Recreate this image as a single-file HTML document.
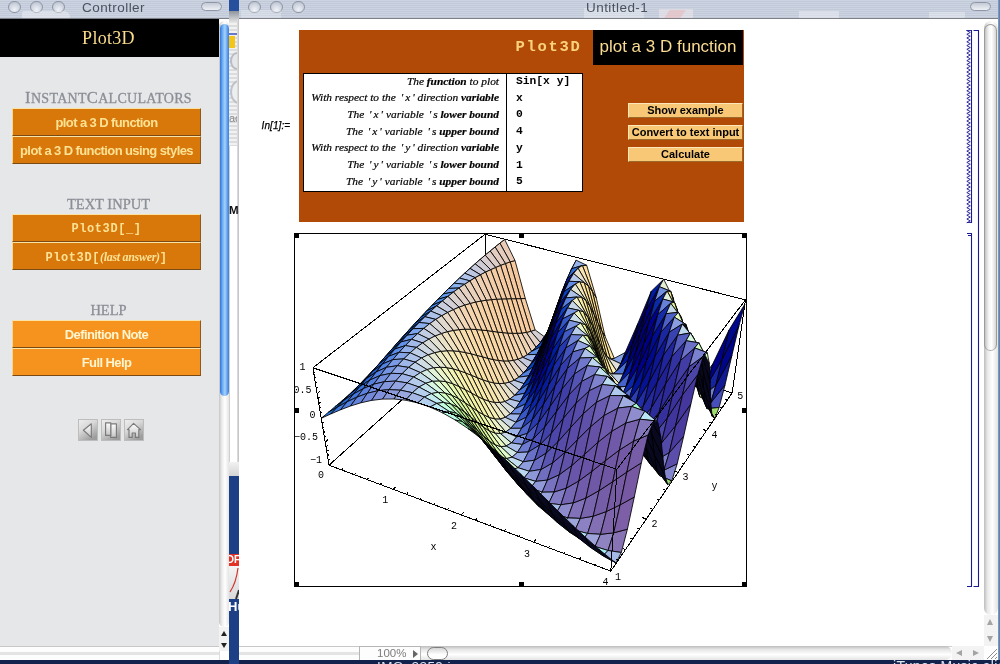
<!DOCTYPE html>
<html><head><meta charset="utf-8"><title>Plot3D</title>
<style>
html,body{margin:0;padding:0;}
body{width:1000px;height:664px;overflow:hidden;position:relative;will-change:transform;background:#1d3f86;font-family:"Liberation Sans",sans-serif;}
.abs{position:absolute;}
.tb{position:absolute;top:0;height:18px;background:repeating-linear-gradient(180deg,#cdd4e1 0,#cdd4e1 1px,#c2cad9 1px,#c2cad9 2px);border-bottom:1px solid #7d8187;}
.wb{position:absolute;top:0.5px;width:12.5px;height:12.5px;border-radius:50%;border:1px solid #8f97a6;background:radial-gradient(circle at 50% 75%,#eef1f6 0,#cfd5e0 55%,#aeb6c6 100%);box-sizing:border-box;}
.pill{position:absolute;height:9px;width:21px;border-radius:5px;border:1px solid #8f97a6;background:linear-gradient(180deg,#c4cad6,#eef0f5);box-sizing:border-box;}
.ttl{position:absolute;top:-0.5px;font-size:13.5px;letter-spacing:0.45px;color:#49515f;line-height:16px;white-space:nowrap;}
.obtn{position:absolute;left:12px;width:189px;height:28px;box-sizing:border-box;border-top:1px solid #fbe3a6;border-left:1px solid #f7d58c;border-bottom:1px solid #7a4a14;border-right:1px solid #8a5a20;color:#fde294;font-weight:bold;font-size:13px;text-align:center;line-height:27px;white-space:nowrap;letter-spacing:-0.6px;}
.o1{background:#d8770a;}
.o2{background:#f6921e;color:#fff6cf;}
.hd{position:absolute;left:0;width:217px;text-align:center;color:#8b8e96;-webkit-text-stroke:0.3px #8b8e96;font-family:"Liberation Serif",serif;white-space:nowrap;}
.row{position:absolute;right:0;white-space:nowrap;font-family:"Liberation Serif",serif;font-style:italic;font-size:11.4px;line-height:14px;color:#000;letter-spacing:0px;word-spacing:0px;-webkit-text-stroke:0.2px #000;}
.row u{display:inline-block;width:2px;text-decoration:none;}
.row i{display:inline-block;width:2px;}
.row b{font-weight:bold;}
.val{position:absolute;left:516px;font-family:"Liberation Mono",monospace;font-weight:bold;font-size:11.3px;line-height:14px;color:#000;white-space:nowrap;}
.cbtn{position:absolute;left:628px;width:115px;height:15px;box-sizing:border-box;background:#f9c877;border-top:1px solid #fde7b8;border-left:1px solid #fde7b8;border-bottom:1px solid #9a6a2a;border-right:1px solid #9a6a2a;font-size:11px;font-weight:bold;text-align:center;line-height:13px;color:#000;white-space:nowrap;}
.pl{font-family:"Liberation Mono",monospace;font-size:10px;fill:#000;}
</style></head><body>

<!-- gap strip between windows -->
<div class="abs" style="left:229px;top:0;width:10px;height:664px;background:#1d3f86;overflow:hidden;">
  <div class="abs" style="left:0;top:0;width:10px;height:11px;background:#27509c;"></div>
  <div class="abs" style="left:0;top:11px;width:10px;height:465px;background:#fff;"></div>
  <div class="abs" style="left:0;top:11px;width:10px;height:135px;background:repeating-linear-gradient(180deg,#f1f1f1 0,#f1f1f1 2px,#dcdcdc 2px,#dcdcdc 4px);"></div>
  <div class="abs" style="left:0;top:11px;width:10px;height:12px;background:linear-gradient(180deg,#8e949c,#e8e8e8);"></div>
  <div class="abs" style="left:0;top:33px;width:10px;height:2px;background:#6a78c8;"></div>
  <div class="abs" style="left:0;top:36px;width:6px;height:12px;background:#f2c518;"></div>
  <div class="abs" style="left:1px;top:52px;width:14px;height:18px;border-radius:50%;border:2px solid #b9bcc2;background:#e6e7ea;box-sizing:border-box;"></div>
  <div class="abs" style="left:1px;top:80px;width:18px;height:24px;border-radius:50%;border:2px solid #bfc2c8;background:#eceef0;box-sizing:border-box;"></div>
  <div class="abs" style="left:0px;top:112px;font-size:11px;line-height:12px;color:#8a8a8a;white-space:nowrap;">ac</div>
  <div class="abs" style="left:0;top:146px;width:1px;height:330px;background:#cfcfcf;"></div>
  <div class="abs" style="left:8px;top:19px;width:2px;height:457px;background:linear-gradient(90deg,#e3e3e3,#bdbdbd);"></div>
  <div class="abs" style="left:0px;top:203px;font-size:11.5px;font-weight:bold;line-height:14px;color:#111;white-space:nowrap;">Ma</div>
  <div class="abs" style="left:0;top:462px;width:10px;height:14px;background:linear-gradient(180deg,#f2f2f2,#d4d4d4);"></div>
  <div class="abs" style="left:0px;top:554px;width:10px;height:12px;background:#e23227;"></div>
  <div class="abs" style="left:-9px;top:554px;font-size:10px;font-weight:bold;line-height:12px;color:#fff;white-space:nowrap;">PDF</div>
  <div class="abs" style="left:0px;top:566px;width:10px;height:33px;background:linear-gradient(180deg,#f4f4f4,#d9d9dc);"></div>
  <svg class="abs" style="left:0;top:566px;" width="10" height="33" viewBox="0 0 10 33" fill="none" stroke="#d0352c" stroke-width="1.2"><path d="M1 26C5 20 8 10 9 2"/><path d="M7 33L10 24" stroke="#333" stroke-width="2"/></svg>
  <div class="abs" style="left:-1px;top:600px;font-size:13px;font-weight:bold;line-height:14px;color:#fff;white-space:nowrap;">Hu</div>
</div>

<!-- Controller window -->
<div class="abs" style="left:0;top:0;width:229px;height:660px;background:#e6e7e9;overflow:hidden;">
  <div class="tb" style="left:0;width:229px;"></div>
  <div class="wb" style="left:8px;"></div><div class="wb" style="left:30px;"></div><div class="wb" style="left:52px;"></div>
  <div class="abs" style="left:22px;top:11px;width:48px;height:7px;background:rgba(255,255,255,0.35);border-radius:2px 6px 0 0;"></div>
  <div class="ttl" style="left:82px;">Controller</div>
  <div class="pill" style="left:201px;top:2px;"></div>
  <div class="abs" style="left:0;top:19px;width:219px;height:38px;background:#000;"></div>
  <div class="abs" style="left:0;top:19px;width:217px;height:38px;text-align:center;font-family:'Liberation Serif',serif;font-size:18px;letter-spacing:0.3px;line-height:38px;color:#fbdc8c;">Plot3D</div>

  <div class="hd" style="top:89px;font-size:14px;line-height:18px;letter-spacing:0.3px;"><span style="font-size:16.5px;">I</span>NSTANT<span style="font-size:16.5px;">C</span>ALCULATORS</div>
  <div class="obtn o1" style="top:108px;">plot a 3 D function</div>
  <div class="obtn o1" style="top:136px;">plot a 3 D function using styles</div>

  <div class="hd" style="top:195px;font-size:14.5px;line-height:18px;">TEXT INPUT</div>
  <div class="obtn o1" style="top:214px;font-family:'Liberation Mono',monospace;font-size:12px;letter-spacing:0.6px;line-height:29px;">Plot3D[_]</div>
  <div class="obtn o1" style="top:242px;font-family:'Liberation Mono',monospace;font-size:12px;letter-spacing:0.6px;line-height:29px;">Plot3D[<span style="font-family:'Liberation Serif',serif;font-style:italic;font-weight:bold;font-size:12px;letter-spacing:-0.3px;">(last answer)</span>]</div>

  <div class="hd" style="top:301px;font-size:14.5px;line-height:18px;">HELP</div>
  <div class="obtn o2" style="top:320px;">Definition Note</div>
  <div class="obtn o2" style="top:348px;">Full Help</div>

  <!-- nav icons -->
  <svg class="abs" style="left:76px;top:417px;" width="70" height="26" viewBox="76 417 70 26">
    <defs><linearGradient id="ib" x1="0" y1="0" x2="0.6" y2="1"><stop offset="0" stop-color="#efefef"/><stop offset="0.45" stop-color="#d9d9d9"/><stop offset="1" stop-color="#9d9d9d"/></linearGradient>
    <linearGradient id="ig" x1="0" y1="0" x2="0" y2="1"><stop offset="0" stop-color="#ffffff"/><stop offset="1" stop-color="#c4c4c4"/></linearGradient></defs>
    <g stroke="#bdbdbd" stroke-width="1" fill="url(#ib)"><rect x="78.500" y="419.500" width="19" height="21"/><rect x="101.500" y="419.500" width="19" height="21"/><rect x="124.500" y="419.500" width="19" height="21"/></g>
    <g stroke="#7a7a7a" stroke-width="1.15" fill="url(#ig)" stroke-linejoin="round">
      <path d="M91.300 423.800L83.400 430.200L91.300 437.400Z"/>
      <rect x="110.600" y="423.800" width="5.800" height="13.600"/>
      <rect x="105.600" y="422.800" width="5.200" height="12.600"/>
      <path d="M133.600 423.400L127.500 429.600H129V437.400H132.200V433H135.400V437.400H138.800V429.600H140.500Z"/>
    </g>
  </svg>

  <!-- scrollbar -->
  <div class="abs" style="left:219px;top:19px;width:10px;height:641px;background:#fff;"></div>
  <div class="abs" style="left:219px;top:21px;width:10px;height:606px;border-radius:5px;background:linear-gradient(90deg,#c6c6c6 0,#ececec 30%,#ffffff 60%,#e4e4e4 100%);"></div>
  <div class="abs" style="left:220px;top:24px;width:9px;height:372px;border-radius:4.5px;background:linear-gradient(90deg,#3373d9 0,#6fb0f5 30%,#a6d2fb 55%,#5596ea 85%,#3f7fdc 100%);"></div>
  <div class="abs" style="left:219px;top:627px;width:10px;height:24px;background:#f3f3f3;"></div>
  <div class="abs" style="left:221px;top:631px;width:0;height:0;border-left:3px solid transparent;border-right:3px solid transparent;border-bottom:5px solid #222;"></div>
  <div class="abs" style="left:221px;top:643px;width:0;height:0;border-left:3px solid transparent;border-right:3px solid transparent;border-top:5px solid #222;"></div>
  <div class="abs" style="left:0;top:646px;width:219px;height:14px;background:linear-gradient(180deg,#c8c8c8 0,#c8c8c8 1px,#fdfdfd 1px,#fdfdfd 6px,#e4e4e4 6px,#e4e4e4 9px,#fdfdfd 9px,#fdfdfd 14px);"></div>
  <div class="abs" style="left:219px;top:651px;width:10px;height:9px;background:#fff;border-left:1px solid #ddd;box-sizing:border-box;"></div>
</div>

<!-- Main window -->
<div class="abs" style="left:239px;top:0;width:761px;height:660px;background:#fff;overflow:hidden;">
  <div class="tb" style="left:0;width:761px;"></div>
  <div class="wb" style="left:9px;"></div><div class="wb" style="left:31px;"></div><div class="wb" style="left:53px;"></div>
  <div class="abs" style="left:2px;top:10px;width:40px;height:8px;background:rgba(255,255,255,0.25);"></div>
  <div class="abs" style="left:345px;top:8px;width:60px;height:10px;background:rgba(255,255,255,0.3);"></div>
  <div class="abs" style="left:420px;top:9px;width:34px;height:9px;background:rgba(255,240,240,0.4);"></div>
  <div class="abs" style="left:428px;top:10px;width:16px;height:8px;background:rgba(235,160,160,0.35);transform:skewX(-35deg);"></div>
  <div class="abs" style="left:560px;top:11px;width:40px;height:7px;background:rgba(255,255,255,0.35);"></div>
  <div class="abs" style="left:690px;top:12px;width:36px;height:6px;background:rgba(255,255,255,0.3);"></div>
  <div class="ttl" style="left:347px;">Untitled-1</div>
  <div class="pill" style="left:731px;top:2px;width:21px;"></div>
</div>

<!-- notebook cell: brown panel -->
<div class="abs" style="left:261.500px;top:120px;font-family:'Liberation Sans',sans-serif;font-style:italic;font-size:10px;line-height:12px;color:#000;-webkit-text-stroke:0.25px #000;white-space:nowrap;letter-spacing:0.1px;">In[1]:=</div>
<div class="abs" style="left:299px;top:30px;width:445px;height:192px;background:#b04a06;"></div>
<div class="abs" style="left:593px;top:30px;width:150px;height:35px;background:#000;"></div>
<div class="abs" style="left:593px;top:30px;width:150px;height:35px;text-align:center;font-size:17px;line-height:34px;color:#fadb92;white-space:nowrap;">plot a 3 D function</div>
<div class="abs" style="left:515.5px;top:37px;font-family:'Liberation Mono',monospace;font-weight:bold;font-size:15.5px;letter-spacing:1.7px;line-height:20px;color:#fbd27c;white-space:nowrap;">Plot3D</div>
<div class="abs" style="left:303px;top:73px;width:280px;height:119px;background:#fff;border:1px solid #000;box-sizing:border-box;"></div>
<div class="abs" style="left:506px;top:73px;width:1px;height:119px;background:#000;"></div>
<div class="abs" style="left:303px;top:0;width:196px;height:200px;">
  <div class="row" style="top:73.7px;">The <b>function</b> to plot</div>
  <div class="row" style="top:90.3px;">With respect to the<u></u> '<i></i>x<i></i>' direction <b>variable</b></div>
  <div class="row" style="top:107.0px;">The<u></u> '<i></i>x<i></i>' variable<u></u> '<i></i>s <b>lower bound</b></div>
  <div class="row" style="top:123.6px;">The<u></u> '<i></i>x<i></i>' variable<u></u> '<i></i>s <b>upper bound</b></div>
  <div class="row" style="top:140.3px;">With respect to the<u></u> '<i></i>y<i></i>' direction <b>variable</b></div>
  <div class="row" style="top:157.1px;">The<u></u> '<i></i>y<i></i>' variable<u></u> '<i></i>s <b>lower bound</b></div>
  <div class="row" style="top:173.9px;">The<u></u> '<i></i>y<i></i>' variable<u></u> '<i></i>s <b>upper bound</b></div>
</div>
<div class="val" style="top:74.1px;">Sin[x y]</div>
<div class="val" style="top:90.7px;">x</div>
<div class="val" style="top:107.4px;">0</div>
<div class="val" style="top:124.0px;">4</div>
<div class="val" style="top:140.7px;">y</div>
<div class="val" style="top:157.5px;">1</div>
<div class="val" style="top:174.3px;">5</div>
<div class="cbtn" style="top:103px;">Show example</div>
<div class="cbtn" style="top:125px;">Convert to text input</div>
<div class="cbtn" style="top:147px;">Calculate</div>

<!-- plot -->
<svg class="abs" style="left:0;top:0;" width="1000" height="664" viewBox="0 0 1000 664">
<rect x="294.5" y="233.500" width="452" height="353" fill="none" stroke="#000" stroke-width="1"/>
<g fill="#000">
<rect x="294" y="233" width="5" height="5"/><rect x="519" y="233" width="5" height="5"/><rect x="742" y="233" width="5" height="5"/>
<rect x="294" y="408" width="5" height="5"/><rect x="742" y="408" width="5" height="5"/>
<rect x="294" y="582" width="5" height="5"/><rect x="519" y="582" width="5" height="5"/><rect x="742" y="582" width="5" height="5"/>
</g>
<g stroke="#000" stroke-width="1" fill="none" shape-rendering="crispEdges">
<path d="M329.0 465.2L312.9 367.8"/>
<path d="M329.0 465.2L488.2 322.4"/>
<path d="M312.9 367.8L485.0 234.3"/>
<path d="M488.2 322.4L485.0 234.3"/>
<path d="M488.2 322.4L732.2 392.9"/>
<path d="M485.0 234.3L745.5 299.8"/>
<path d="M732.2 392.9L745.5 299.8"/>
</g>
<g stroke="#000" stroke-width="0.85" stroke-linejoin="round">
<polygon points="530.7,331.3 540.4,342.6 544.8,337.0 535.1,329.9" fill="#d4cdd2"/>
<polygon points="526.3,332.4 536.1,347.4 540.4,342.6 530.7,331.3" fill="#e2d1c6"/>
<polygon points="520.7,298.6 530.7,331.3 535.1,329.9 525.3,298.5" fill="#f5cba1"/>
<polygon points="540.4,342.6 550.3,327.6 554.7,317.4 544.8,337.0" fill="#000067"/>
<polygon points="536.1,347.4 545.9,337.3 550.3,327.6 540.4,342.6" fill="#00099a"/>
<polygon points="521.7,333.0 531.6,351.4 536.1,347.4 526.3,332.4" fill="#ead2bc"/>
<polygon points="516.0,298.7 526.3,332.4 530.7,331.3 520.7,298.6" fill="#f6cca0"/>
<polygon points="531.6,351.4 541.5,346.3 545.9,337.3 536.1,347.4" fill="#054ecb"/>
<polygon points="481.9,283.6 490.4,253.4 495.2,248.9 486.6,279.7" fill="#08081e"/>
<polygon points="517.1,333.3 527.2,354.7 531.6,351.4 521.7,333.0" fill="#efd3b5"/>
<polygon points="527.2,354.7 537.0,354.4 541.5,346.3 531.6,351.4" fill="#5d8ee7"/>
<polygon points="477.2,287.6 485.6,258.1 490.4,253.4 481.9,283.6" fill="#08081e"/>
<polygon points="511.3,298.7 521.7,333.0 526.3,332.4 516.0,298.7" fill="#f7cc9f"/>
<polygon points="510.2,261.9 520.7,298.6 525.3,298.5 515.0,260.5" fill="#f5c89d"/>
<polygon points="522.6,357.3 532.5,361.6 537.0,354.4 527.2,354.7" fill="#9eb6e9"/>
<polygon points="472.4,291.7 480.7,262.8 485.6,258.1 477.2,287.6" fill="#08081e"/>
<polygon points="512.3,333.3 522.6,357.3 527.2,354.7 517.1,333.3" fill="#f2d3af"/>
<polygon points="550.3,327.6 560.8,296.1 565.3,283.9 554.7,317.4" fill="#08081e"/>
<polygon points="610.5,358.9 620.8,363.8 625.2,352.5 614.3,358.3" fill="#83a0e6"/>
<polygon points="545.9,337.3 556.2,308.7 560.8,296.1 550.3,327.6" fill="#08081e"/>
<polygon points="517.9,359.2 528.0,367.8 532.5,361.6 522.6,357.3" fill="#c5cade"/>
<polygon points="505.4,263.5 516.0,298.7 520.7,298.6 510.2,261.9" fill="#f5c99f"/>
<polygon points="506.5,298.8 517.1,333.3 521.7,333.0 511.3,298.7" fill="#f7cd9e"/>
<polygon points="601.4,329.7 610.5,358.9 614.3,358.3 605.0,336.2" fill="#fce3a1"/>
<polygon points="541.5,346.3 551.7,321.2 556.2,308.7 545.9,337.3" fill="#08081e"/>
<polygon points="467.5,295.8 475.8,267.6 480.7,262.8 472.4,291.7" fill="#08081e"/>
<polygon points="490.4,253.4 499.9,243.2 504.7,239.5 495.2,248.9" fill="#08081e"/>
<polygon points="537.0,354.4 547.1,333.6 551.7,321.2 541.5,346.3" fill="#00004f"/>
<polygon points="507.5,333.0 517.9,359.2 522.6,357.3 512.3,333.3" fill="#f5d3ab"/>
<polygon points="606.8,356.1 616.6,371.0 620.8,363.8 610.5,358.9" fill="#dcded7"/>
<polygon points="499.9,243.2 510.2,261.9 515.0,260.5 504.7,239.5" fill="#e9cbb7"/>
<polygon points="532.5,361.6 542.6,345.4 547.1,333.6 537.0,354.4" fill="#000070"/>
<polygon points="513.2,360.4 523.4,373.0 528.0,367.8 517.9,359.2" fill="#dbd3d1"/>
<polygon points="462.5,299.9 470.8,272.5 475.8,267.6 467.5,295.8" fill="#08081e"/>
<polygon points="485.6,258.1 495.1,247.0 499.9,243.2 490.4,253.4" fill="#08081e"/>
<polygon points="500.6,265.3 511.3,298.7 516.0,298.7 505.4,263.5" fill="#f5caa1"/>
<polygon points="528.0,367.8 538.0,356.6 542.6,345.4 532.5,361.6" fill="#000899"/>
<polygon points="501.6,298.9 512.3,333.3 517.1,333.3 506.5,298.8" fill="#f7cd9f"/>
<polygon points="495.1,247.0 505.4,263.5 510.2,261.9 499.9,243.2" fill="#e6ccbc"/>
<polygon points="523.4,373.0 533.4,366.8 538.0,356.6 528.0,367.8" fill="#0144c4"/>
<polygon points="616.6,371.0 628.0,360.4 632.8,343.2 620.8,363.8" fill="#0015a0"/>
<polygon points="597.7,321.9 606.8,356.1 610.5,358.9 601.4,329.7" fill="#fde192"/>
<polygon points="620.8,363.8 632.8,343.2 637.8,323.7 625.2,352.5" fill="#000077"/>
<polygon points="457.5,304.1 465.8,277.4 470.8,272.5 462.5,299.9" fill="#08081e"/>
<polygon points="502.5,332.6 513.2,360.4 517.9,359.2 507.5,333.0" fill="#f6d3a8"/>
<polygon points="603.2,350.3 612.7,373.9 616.6,371.0 606.8,356.1" fill="#f7eab3"/>
<polygon points="508.3,360.9 518.7,377.1 523.4,373.0 513.2,360.4" fill="#e7d8c5"/>
<polygon points="480.7,262.8 490.2,251.0 495.1,247.0 485.6,258.1" fill="#08081e"/>
<polygon points="612.7,373.9 623.4,374.1 628.0,360.4 616.6,371.0" fill="#4d70d4"/>
<polygon points="592.3,291.0 601.4,329.7 605.0,336.2 596.2,297.6" fill="#fedc8b"/>
<polygon points="495.6,267.4 506.5,298.8 511.3,298.7 500.6,265.3" fill="#f4cba3"/>
<polygon points="518.7,377.1 528.8,375.9 533.4,366.8 523.4,373.0" fill="#5181e1"/>
<polygon points="496.6,299.2 507.5,333.0 512.3,333.3 501.6,298.9" fill="#f7ce9f"/>
<polygon points="490.2,251.0 500.6,265.3 505.4,263.5 495.1,247.0" fill="#e3cdc1"/>
<polygon points="452.4,308.4 460.7,282.4 465.8,277.4 457.5,304.1" fill="#08081e"/>
<polygon points="475.8,267.6 485.2,255.1 490.2,251.0 480.7,262.8" fill="#08081e"/>
<polygon points="608.9,372.5 619.1,383.3 623.4,374.1 612.7,373.9" fill="#bfcde5"/>
<polygon points="513.9,380.2 524.1,383.7 528.8,375.9 518.7,377.1" fill="#93afe9"/>
<polygon points="503.4,360.9 513.9,380.2 518.7,377.1 508.3,360.9" fill="#efdabc"/>
<polygon points="560.8,296.1 571.7,268.7 576.2,260.2 565.3,283.9" fill="#08081e"/>
<polygon points="497.5,332.0 508.3,360.9 513.2,360.4 502.5,332.6" fill="#f7d4a5"/>
<polygon points="556.2,308.7 567.1,278.9 571.7,268.7 560.8,296.1" fill="#08081e"/>
<polygon points="490.6,269.6 501.6,298.9 506.5,298.8 495.6,267.4" fill="#f3cca6"/>
<polygon points="447.3,312.7 455.5,287.5 460.7,282.4 452.4,308.4" fill="#08081e"/>
<polygon points="599.5,342.5 608.9,372.5 612.7,373.9 603.2,350.3" fill="#fae798"/>
<polygon points="485.2,255.1 495.6,267.4 500.6,265.3 490.2,251.0" fill="#decdc7"/>
<polygon points="551.7,321.2 562.4,290.6 567.1,278.9 556.2,308.7" fill="#08081e"/>
<polygon points="593.9,313.8 603.2,350.3 606.8,356.1 597.7,321.9" fill="#fce089"/>
<polygon points="470.8,272.5 480.2,259.4 485.2,255.1 475.8,267.6" fill="#08081e"/>
<polygon points="547.1,333.6 557.8,303.5 562.4,290.6 551.7,321.2" fill="#08081e"/>
<polygon points="542.6,345.4 553.1,317.1 557.8,303.5 547.1,333.6" fill="#08081e"/>
<polygon points="491.5,299.6 502.5,332.6 507.5,333.0 496.6,299.2" fill="#f7cfa0"/>
<polygon points="538.0,356.6 548.4,331.1 553.1,317.1 542.6,345.4" fill="#00004e"/>
<polygon points="509.1,382.2 519.4,390.3 524.1,383.7 513.9,380.2" fill="#bfcae2"/>
<polygon points="605.2,367.3 615.0,387.4 619.1,383.3 608.9,372.5" fill="#f0eec2"/>
<polygon points="686.9,362.0 695.5,386.7 699.1,382.2 688.9,372.2" fill="#f0f6af"/>
<polygon points="533.4,366.8 543.7,345.1 548.4,331.1 538.0,356.6" fill="#000061"/>
<polygon points="588.3,285.8 597.7,321.9 601.4,329.7 592.3,291.0" fill="#fedd8c"/>
<polygon points="619.1,383.3 630.7,371.3 635.7,352.4 623.4,374.1" fill="#00169e"/>
<polygon points="528.8,375.9 539.0,358.6 543.7,345.1 533.4,366.8" fill="#00007b"/>
<polygon points="442.1,317.0 450.3,292.7 455.5,287.5 447.3,312.7" fill="#08081e"/>
<polygon points="498.3,360.4 509.1,382.2 513.9,380.2 503.4,360.9" fill="#f3dbb5"/>
<polygon points="623.4,374.1 635.7,352.4 640.9,331.2 628.0,360.4" fill="#00007e"/>
<polygon points="615.0,387.4 626.0,386.4 630.7,371.3 619.1,383.3" fill="#4463cc"/>
<polygon points="465.8,277.4 475.1,263.8 480.2,259.4 470.8,272.5" fill="#08081e"/>
<polygon points="492.4,331.3 503.4,360.9 508.3,360.9 497.5,332.0" fill="#f8d5a4"/>
<polygon points="480.2,259.4 490.6,269.6 495.6,267.4 485.2,255.1" fill="#d8cdce"/>
<polygon points="582.4,265.5 592.3,291.0 596.2,297.6 586.7,265.3" fill="#fcdfa1"/>
<polygon points="485.5,272.0 496.6,299.2 501.6,298.9 490.6,269.6" fill="#f2cda9"/>
<polygon points="695.5,386.7 707.2,384.9 712.7,364.1 699.1,382.2" fill="#374bba"/>
<polygon points="524.1,383.7 534.3,371.3 539.0,358.6 528.8,375.9" fill="#000a9b"/>
<polygon points="628.0,360.4 640.9,331.2 646.2,310.0 632.8,343.2" fill="#00006d"/>
<polygon points="504.1,383.3 514.6,395.4 519.4,390.3 509.1,382.2" fill="#d9d8d6"/>
<polygon points="519.4,390.3 529.6,382.9 534.3,371.3 524.1,383.7" fill="#033cbd"/>
<polygon points="571.7,268.7 582.4,265.5 586.7,265.3 576.2,260.2" fill="#97b5ec"/>
<polygon points="611.1,386.6 621.6,396.3 626.0,386.4 615.0,387.4" fill="#b3c5e7"/>
<polygon points="486.3,300.2 497.5,332.0 502.5,332.6 491.5,299.6" fill="#f7d0a2"/>
<polygon points="436.8,321.5 445.0,298.0 450.3,292.7 442.1,317.0" fill="#08081e"/>
<polygon points="693.1,381.4 702.9,396.3 707.2,384.9 695.5,386.7" fill="#c7dae7"/>
<polygon points="460.7,282.4 470.0,268.4 475.1,263.8 465.8,277.4" fill="#08081e"/>
<polygon points="632.8,343.2 646.2,310.0 651.3,291.2 637.8,323.7" fill="#000067"/>
<polygon points="595.7,333.5 605.2,367.3 608.9,372.5 599.5,342.5" fill="#f8e488"/>
<polygon points="475.1,263.8 485.5,272.0 490.6,269.6 480.2,259.4" fill="#d1ccd4"/>
<polygon points="514.6,395.4 524.9,393.2 529.6,382.9 519.4,390.3" fill="#4773da"/>
<polygon points="601.5,359.3 611.1,386.6 615.0,387.4 605.2,367.3" fill="#f7ed9b"/>
<polygon points="590.0,306.3 599.5,342.5 603.2,350.3 593.9,313.8" fill="#fbe086"/>
<polygon points="493.1,359.5 504.1,383.3 509.1,382.2 498.3,360.4" fill="#f6dcaf"/>
<polygon points="480.4,274.7 491.5,299.6 496.6,299.2 485.5,272.0" fill="#f1cead"/>
<polygon points="679.3,322.8 686.9,362.0 688.9,372.2 681.1,338.2" fill="#08081e"/>
<polygon points="567.1,278.9 578.0,268.2 582.4,265.5 571.7,268.7" fill="#2f6ad9"/>
<polygon points="487.1,330.6 498.3,360.4 503.4,360.9 492.4,331.3" fill="#f9d6a4"/>
<polygon points="584.1,282.5 593.9,313.8 597.7,321.9 588.3,285.8" fill="#fde093"/>
<polygon points="431.4,325.9 439.6,303.3 445.0,298.0 436.8,321.5" fill="#08081e"/>
<polygon points="578.0,268.2 588.3,285.8 592.3,291.0 582.4,265.5" fill="#f6e2b3"/>
<polygon points="685.2,346.7 693.1,381.4 695.5,386.7 686.9,362.0" fill="#08081e"/>
<polygon points="499.0,383.5 509.7,399.1 514.6,395.4 504.1,383.3" fill="#e8dfc9"/>
<polygon points="455.5,287.5 464.7,273.2 470.0,268.4 460.7,282.4" fill="#08081e"/>
<polygon points="509.7,399.1 520.1,401.8 524.9,393.2 514.6,395.4" fill="#87a5e7"/>
<polygon points="607.4,381.3 617.4,400.5 621.6,396.3 611.1,386.6" fill="#eef3c6"/>
<polygon points="470.0,268.4 480.4,274.7 485.5,272.0 475.1,263.8" fill="#c8cadb"/>
<polygon points="562.4,290.6 573.5,273.5 578.0,268.2 567.1,278.9" fill="#001ca9"/>
<polygon points="481.0,301.0 492.4,331.3 497.5,332.0 486.3,300.2" fill="#f7d1a4"/>
<polygon points="621.6,396.3 633.4,385.7 638.5,365.8 626.0,386.4" fill="#0b26a6"/>
<polygon points="702.9,396.3 715.9,385.2 722.2,359.2 707.2,384.9" fill="#16249f"/>
<polygon points="699.8,396.7 710.8,402.7 715.9,385.2 702.9,396.3" fill="#7283d5"/>
<polygon points="691.3,368.4 699.8,396.7 702.9,396.3 693.1,381.4" fill="#08081e"/>
<polygon points="617.4,400.5 628.5,400.9 633.4,385.7 621.6,396.3" fill="#576fcf"/>
<polygon points="626.0,386.4 638.5,365.8 643.9,343.4 630.7,371.3" fill="#00008a"/>
<polygon points="426.0,330.5 434.2,308.7 439.6,303.3 431.4,325.9" fill="#08081e"/>
<polygon points="557.8,303.5 568.9,281.3 573.5,273.5 562.4,290.6" fill="#000081"/>
<polygon points="475.1,277.6 486.3,300.2 491.5,299.6 480.4,274.7" fill="#efcfb1"/>
<polygon points="450.3,292.7 459.5,278.1 464.7,273.2 455.5,287.5" fill="#08081e"/>
<polygon points="487.8,358.3 499.0,383.5 504.1,383.3 493.1,359.5" fill="#f8ddab"/>
<polygon points="553.1,317.1 564.1,291.5 568.9,281.3 557.8,303.5" fill="#00006a"/>
<polygon points="504.7,401.5 515.2,408.8 520.1,401.8 509.7,399.1" fill="#b8c7e5"/>
<polygon points="481.7,330.0 493.1,359.5 498.3,360.4 487.1,330.6" fill="#f9d7a4"/>
<polygon points="548.4,331.1 559.4,303.8 564.1,291.5 553.1,317.1" fill="#000060"/>
<polygon points="573.5,273.5 584.1,282.5 588.3,285.8 578.0,268.2" fill="#e6e0cd"/>
<polygon points="493.7,382.9 504.7,401.5 509.7,399.1 499.0,383.5" fill="#f0e2bf"/>
<polygon points="630.7,371.3 643.9,343.4 649.3,320.9 635.7,352.4" fill="#00007b"/>
<polygon points="543.7,345.1 554.6,317.6 559.4,303.8 548.4,331.1" fill="#00005e"/>
<polygon points="464.7,273.2 475.1,277.6 480.4,274.7 470.0,268.4" fill="#bdc7e2"/>
<polygon points="539.0,358.6 549.7,332.6 554.6,317.6 543.7,345.1" fill="#000063"/>
<polygon points="534.3,371.3 544.9,348.0 549.7,332.6 539.0,358.6" fill="#00006e"/>
<polygon points="707.2,384.9 722.2,359.2 729.0,330.1 712.7,364.1" fill="#000187"/>
<polygon points="529.6,382.9 540.1,363.3 544.9,348.0 534.3,371.3" fill="#00007e"/>
<polygon points="591.8,324.6 601.5,359.3 605.2,367.3 595.7,333.5" fill="#f6e280"/>
<polygon points="613.6,399.0 624.1,410.2 628.5,400.9 617.4,400.5" fill="#bfd2e8"/>
<polygon points="597.7,349.6 607.4,381.3 611.1,386.6 601.5,359.3" fill="#f1e682"/>
<polygon points="524.9,393.2 535.3,378.0 540.1,363.3 529.6,382.9" fill="#000495"/>
<polygon points="585.9,300.4 595.7,333.5 599.5,342.5 590.0,306.3" fill="#fbe289"/>
<polygon points="420.5,335.1 428.7,314.2 434.2,308.7 426.0,330.5" fill="#08081e"/>
<polygon points="579.8,281.7 590.0,306.3 593.9,313.8 584.1,282.5" fill="#fce5a0"/>
<polygon points="475.6,302.0 487.1,330.6 492.4,331.3 481.0,301.0" fill="#f6d2a7"/>
<polygon points="697.8,387.2 707.1,408.7 710.8,402.7 699.8,396.7" fill="#e6fbc0"/>
<polygon points="445.0,298.0 454.1,283.2 459.5,278.1 450.3,292.7" fill="#08081e"/>
<polygon points="520.1,401.8 530.5,391.7 535.3,378.0 524.9,393.2" fill="#0029af"/>
<polygon points="635.7,352.4 649.3,320.9 654.6,301.2 640.9,331.2" fill="#000078"/>
<polygon points="603.7,372.6 613.6,399.0 617.4,400.5 607.4,381.3" fill="#f0ee95"/>
<polygon points="469.8,280.8 481.0,301.0 486.3,300.2 475.1,277.6" fill="#edd0b6"/>
<polygon points="499.5,402.5 510.3,413.9 515.2,408.8 504.7,401.5" fill="#d6dbdb"/>
<polygon points="515.2,408.8 525.7,403.8 530.5,391.7 520.1,401.8" fill="#2f58ca"/>
<polygon points="670.7,291.3 679.3,322.8 681.1,338.2 673.5,299.0" fill="#08081e"/>
<polygon points="459.5,278.1 469.8,280.8 475.1,277.6 464.7,273.2" fill="#afc2e8"/>
<polygon points="640.9,331.2 654.6,301.2 659.4,286.7 646.2,310.0" fill="#000082"/>
<polygon points="568.9,281.3 579.8,281.7 584.1,282.5 573.5,273.5" fill="#b8cae7"/>
<polygon points="677.2,309.6 685.2,346.7 686.9,362.0 679.3,322.8" fill="#08081e"/>
<polygon points="707.1,408.7 719.1,407.5 725.0,385.0 710.8,402.7" fill="#4650b8"/>
<polygon points="482.4,356.8 493.7,382.9 499.0,383.5 487.8,358.3" fill="#f9dea9"/>
<polygon points="646.2,310.0 659.4,286.7 663.7,279.2 651.3,291.2" fill="#0019a2"/>
<polygon points="414.9,339.7 423.2,319.8 428.7,314.2 420.5,335.1" fill="#08081e"/>
<polygon points="683.6,330.4 691.3,368.4 693.1,381.4 685.2,346.7" fill="#08081e"/>
<polygon points="439.6,303.3 448.7,288.4 454.1,283.2 445.0,298.0" fill="#08081e"/>
<polygon points="488.4,381.6 499.5,402.5 504.7,401.5 493.7,382.9" fill="#f5e4b6"/>
<polygon points="476.3,329.5 487.8,358.3 493.1,359.5 481.7,330.0" fill="#f9d8a5"/>
<polygon points="624.1,410.2 635.9,403.3 641.1,383.6 628.5,400.9" fill="#2c3eb2"/>
<polygon points="510.3,413.9 520.8,414.1 525.7,403.8 515.2,408.8" fill="#6a89df"/>
<polygon points="609.9,392.5 620.0,412.8 624.1,410.2 613.6,399.0" fill="#edf8ba"/>
<polygon points="710.8,402.7 725.0,385.0 731.9,355.4 715.9,385.2" fill="#111994"/>
<polygon points="628.5,400.9 641.1,383.6 646.6,360.3 633.4,385.7" fill="#001396"/>
<polygon points="620.0,412.8 631.1,417.2 635.9,403.3 624.1,410.2" fill="#7c8fdb"/>
<polygon points="704.7,402.9 714.8,418.5 719.1,407.5 707.1,408.7" fill="#a0dc6e"/>
<polygon points="689.9,351.3 697.8,387.2 699.8,396.7 691.3,368.4" fill="#08081e"/>
<polygon points="470.2,303.4 481.7,330.0 487.1,330.6 475.6,302.0" fill="#f5d4aa"/>
<polygon points="464.5,284.3 475.6,302.0 481.0,301.0 469.8,280.8" fill="#ead1bb"/>
<polygon points="454.1,283.2 464.5,284.3 469.8,280.8 459.5,278.1" fill="#9fbcec"/>
<polygon points="564.1,291.5 575.3,284.0 579.8,281.7 568.9,281.3" fill="#628ce4"/>
<polygon points="575.3,284.0 585.9,300.4 590.0,306.3 579.8,281.7" fill="#f6e8b5"/>
<polygon points="494.2,402.3 505.2,417.3 510.3,413.9 499.5,402.5" fill="#e8e6ce"/>
<polygon points="434.2,308.7 443.3,293.9 448.7,288.4 439.6,303.3" fill="#08081e"/>
<polygon points="409.3,344.5 417.5,325.4 423.2,319.8 414.9,339.7" fill="#08081e"/>
<polygon points="505.2,417.3 515.9,422.3 520.8,414.1 510.3,413.9" fill="#a0b6e8"/>
<polygon points="633.4,385.7 646.6,360.3 652.3,336.2 638.5,365.8" fill="#000088"/>
<polygon points="659.4,286.7 670.7,291.3 673.5,299.0 663.7,279.2" fill="#e5edd3"/>
<polygon points="581.6,297.1 591.8,324.6 595.7,333.5 585.9,300.4" fill="#fae693"/>
<polygon points="587.7,316.9 597.7,349.6 601.5,359.3 591.8,324.6" fill="#f4e37f"/>
<polygon points="593.8,339.5 603.7,372.6 607.4,381.3 597.7,349.6" fill="#ece176"/>
<polygon points="696.6,370.6 704.7,402.9 707.1,408.7 697.8,387.2" fill="#08081e"/>
<polygon points="559.4,303.8 570.6,289.4 575.3,284.0 564.1,291.5" fill="#0941c1"/>
<polygon points="715.9,385.2 731.9,355.4 738.9,325.9 722.2,359.2" fill="#000688"/>
<polygon points="616.3,409.1 626.8,423.8 631.1,417.2 620.0,412.8" fill="#daeee0"/>
<polygon points="476.8,355.3 488.4,381.6 493.7,382.9 482.4,356.8" fill="#fadfa8"/>
<polygon points="600.0,361.8 609.9,392.5 613.6,399.0 603.7,372.6" fill="#e4e275"/>
<polygon points="448.7,288.4 459.0,288.0 464.5,284.3 454.1,283.2" fill="#8db3ef"/>
<polygon points="470.7,329.2 482.4,356.8 487.8,358.3 476.3,329.5" fill="#f9d9a7"/>
<polygon points="482.8,379.8 494.2,402.3 499.5,402.5 488.4,381.6" fill="#f8e6b0"/>
<polygon points="459.0,288.0 470.2,303.4 475.6,302.0 464.5,284.3" fill="#e6d2c2"/>
<polygon points="638.5,365.8 652.3,336.2 657.7,314.8 643.9,343.4" fill="#000084"/>
<polygon points="428.7,314.2 437.8,299.4 443.3,293.9 434.2,308.7" fill="#08081e"/>
<polygon points="554.6,317.6 565.8,297.9 570.6,289.4 559.4,303.8" fill="#000d9d"/>
<polygon points="403.6,349.3 411.8,331.2 417.5,325.4 409.3,344.5" fill="#08081e"/>
<polygon points="525.7,403.8 536.4,388.5 541.3,372.1 530.5,391.7" fill="#00119c"/>
<polygon points="530.5,391.7 541.3,372.1 546.2,355.3 535.3,378.0" fill="#00008c"/>
<polygon points="464.6,305.1 476.3,329.5 481.7,330.0 470.2,303.4" fill="#f4d5ae"/>
<polygon points="535.3,378.0 546.2,355.3 551.1,338.7 540.1,363.3" fill="#000081"/>
<polygon points="520.8,414.1 531.5,403.7 536.4,388.5 525.7,403.8" fill="#0c30b0"/>
<polygon points="667.1,291.0 677.2,309.6 679.3,322.8 670.7,291.3" fill="#efed90"/>
<polygon points="500.0,418.9 510.8,428.3 515.9,422.3 505.2,417.3" fill="#c8d6e4"/>
<polygon points="549.7,332.6 561.0,309.3 565.8,297.9 554.6,317.6" fill="#000087"/>
<polygon points="540.1,363.3 551.1,338.7 556.0,323.1 544.9,348.0" fill="#00007b"/>
<polygon points="544.9,348.0 556.0,323.1 561.0,309.3 549.7,332.6" fill="#00007d"/>
<polygon points="654.6,301.2 667.1,291.0 670.7,291.3 659.4,286.7" fill="#728fe0"/>
<polygon points="606.2,382.3 616.3,409.1 620.0,412.8 609.9,392.5" fill="#dfe77f"/>
<polygon points="570.6,289.4 581.6,297.1 585.9,300.4 575.3,284.0" fill="#e2e4d3"/>
<polygon points="488.7,401.1 500.0,418.9 505.2,417.3 494.2,402.3" fill="#f1ebc1"/>
<polygon points="515.9,422.3 526.5,417.1 531.5,403.7 520.8,414.1" fill="#3857c6"/>
<polygon points="626.8,423.8 638.4,422.9 643.6,405.2 631.1,417.2" fill="#5663c4"/>
<polygon points="703.5,387.8 712.1,416.3 714.8,418.5 704.7,402.9" fill="#08081e"/>
<polygon points="643.9,343.4 657.7,314.8 662.8,299.0 649.3,320.9" fill="#00028d"/>
<polygon points="631.1,417.2 643.6,405.2 649.1,381.9 635.9,403.3" fill="#212da4"/>
<polygon points="674.4,302.2 683.6,330.4 685.2,346.7 677.2,309.6" fill="#08081e"/>
<polygon points="649.3,320.9 662.8,299.0 667.1,291.0 654.6,301.2" fill="#0b2aaa"/>
<polygon points="443.3,293.9 453.5,292.0 459.0,288.0 448.7,288.4" fill="#79a8f0"/>
<polygon points="423.2,319.8 432.2,305.2 437.8,299.4 428.7,314.2" fill="#08081e"/>
<polygon points="722.2,359.2 738.9,325.9 744.9,304.1 729.0,330.1" fill="#00098b"/>
<polygon points="397.8,354.1 406.1,337.0 411.8,331.2 403.6,349.3" fill="#08081e"/>
<polygon points="510.8,428.3 521.6,428.3 526.5,417.1 515.9,422.3" fill="#6a84da"/>
<polygon points="453.5,292.0 464.6,305.1 470.2,303.4 459.0,288.0" fill="#e1d2c8"/>
<polygon points="622.9,423.1 633.8,433.2 638.4,422.9 626.8,423.8" fill="#b2c8ea"/>
<polygon points="681.4,317.6 689.9,351.3 691.3,368.4 683.6,330.4" fill="#08081e"/>
<polygon points="635.9,403.3 649.1,381.9 655.0,356.4 641.1,383.6" fill="#061293"/>
<polygon points="577.0,297.0 587.7,316.9 591.8,324.6 581.6,297.1" fill="#f8eca7"/>
<polygon points="471.1,353.8 482.8,379.8 488.4,381.6 476.8,355.3" fill="#fae1a8"/>
<polygon points="612.7,400.3 622.9,423.1 626.8,423.8 616.3,409.1" fill="#def194"/>
<polygon points="465.0,329.2 476.8,355.3 482.4,356.8 470.7,329.2" fill="#f8dba9"/>
<polygon points="459.0,307.1 470.7,329.2 476.3,329.5 464.6,305.1" fill="#f2d6b3"/>
<polygon points="494.6,418.8 505.7,432.0 510.8,428.3 500.0,418.9" fill="#e1e9d7"/>
<polygon points="477.2,377.6 488.7,401.1 494.2,402.3 482.8,379.8" fill="#f9e7ac"/>
<polygon points="583.4,311.8 593.8,339.5 597.7,349.6 587.7,316.9" fill="#f4e788"/>
<polygon points="565.8,297.9 577.0,297.0 581.6,297.1 570.6,289.4" fill="#acc2e9"/>
<polygon points="688.3,334.9 696.6,370.6 697.8,387.2 689.9,351.3" fill="#08081e"/>
<polygon points="417.5,325.4 426.5,311.1 432.2,305.2 423.2,319.8" fill="#08081e"/>
<polygon points="437.8,299.4 447.9,296.4 453.5,292.0 443.3,293.9" fill="#659def"/>
<polygon points="505.7,432.0 516.6,436.9 521.6,428.3 510.8,428.3" fill="#9db3e7"/>
<polygon points="589.8,330.7 600.0,361.8 603.7,372.6 593.8,339.5" fill="#e8e074"/>
<polygon points="391.9,359.1 400.2,342.9 406.1,337.0 397.8,354.1" fill="#08081e"/>
<polygon points="662.8,299.0 674.4,302.2 677.2,309.6 667.1,291.0" fill="#dfeeda"/>
<polygon points="483.1,399.0 494.6,418.8 500.0,418.9 488.7,401.1" fill="#f5eeb7"/>
<polygon points="641.1,383.6 655.0,356.4 660.7,332.4 646.6,360.3" fill="#00088c"/>
<polygon points="596.1,350.8 606.2,382.3 609.9,392.5 600.0,361.8" fill="#dada66"/>
<polygon points="447.9,296.4 459.0,307.1 464.6,305.1 453.5,292.0" fill="#dad1cf"/>
<polygon points="695.3,352.1 703.5,387.8 704.7,402.9 696.6,370.6" fill="#08081e"/>
<polygon points="633.8,433.2 645.9,428.7 651.4,407.7 638.4,422.9" fill="#484fb5"/>
<polygon points="561.0,309.3 572.3,300.5 577.0,297.0 565.8,297.9" fill="#577edd"/>
<polygon points="411.8,331.2 420.8,317.1 426.5,311.1 417.5,325.4" fill="#08081e"/>
<polygon points="619.3,415.8 629.8,435.2 633.8,433.2 622.9,423.1" fill="#ddfbb1"/>
<polygon points="432.2,305.2 442.3,301.0 447.9,296.4 437.8,299.4" fill="#5190ec"/>
<polygon points="526.5,417.1 537.4,403.2 542.4,385.6 531.5,403.7" fill="#0a25a5"/>
<polygon points="521.6,428.3 532.5,419.4 537.4,403.2 526.5,417.1" fill="#2840b6"/>
<polygon points="453.3,309.5 465.0,329.2 470.7,329.2 459.0,307.1" fill="#f0d8b8"/>
<polygon points="629.8,435.2 641.1,441.9 645.9,428.7 633.8,433.2" fill="#91a1df"/>
<polygon points="500.3,433.5 511.4,442.9 516.6,436.9 505.7,432.0" fill="#c7d9e6"/>
<polygon points="646.6,360.3 660.7,332.4 666.1,313.7 652.3,336.2" fill="#000d91"/>
<polygon points="602.5,370.2 612.7,400.3 616.3,409.1 606.2,382.3" fill="#08081e"/>
<polygon points="385.9,364.1 394.3,348.9 400.2,342.9 391.9,359.1" fill="#08081e"/>
<polygon points="531.5,403.7 542.4,385.6 547.5,367.3 536.4,388.5" fill="#001299"/>
<polygon points="638.4,422.9 651.4,407.7 657.4,381.8 643.6,405.2" fill="#24299e"/>
<polygon points="572.3,300.5 583.4,311.8 587.7,316.9 577.0,297.0" fill="#eeedc6"/>
<polygon points="459.2,329.6 471.1,353.8 476.8,355.3 465.0,329.2" fill="#f7ddad"/>
<polygon points="489.0,417.3 500.3,433.5 505.7,432.0 494.6,418.8" fill="#edf2c7"/>
<polygon points="657.7,314.8 670.7,303.2 674.4,302.2 662.8,299.0" fill="#6780d8"/>
<polygon points="465.3,352.5 477.2,377.6 482.8,379.8 471.1,353.8" fill="#fae3a9"/>
<polygon points="516.6,436.9 527.5,433.3 532.5,419.4 521.6,428.3" fill="#4f64c8"/>
<polygon points="556.0,323.1 567.5,307.9 572.3,300.5 561.0,309.3" fill="#113ebc"/>
<polygon points="536.4,388.5 547.5,367.3 552.5,349.5 541.3,372.1" fill="#000691"/>
<polygon points="670.7,303.2 681.4,317.6 683.6,330.4 674.4,302.2" fill="#e9f29a"/>
<polygon points="652.3,336.2 666.1,313.7 670.7,303.2 657.7,314.8" fill="#152ba8"/>
<polygon points="471.3,375.2 483.1,399.0 488.7,401.1 477.2,377.6" fill="#f9e9a9"/>
<polygon points="541.3,372.1 552.5,349.5 557.5,333.0 546.2,355.3" fill="#00018f"/>
<polygon points="551.1,338.7 562.6,318.9 567.5,307.9 556.0,323.1" fill="#0018a2"/>
<polygon points="442.3,301.0 453.3,309.5 459.0,307.1 447.9,296.4" fill="#d2d0d6"/>
<polygon points="546.2,355.3 557.5,333.0 562.6,318.9 551.1,338.7" fill="#000694"/>
<polygon points="702.6,368.3 710.8,402.8 712.1,416.3 703.5,387.8" fill="#08081e"/>
<polygon points="406.1,337.0 415.0,323.3 420.8,317.1 411.8,331.2" fill="#08081e"/>
<polygon points="511.4,442.9 522.4,444.5 527.5,433.3 516.6,436.9" fill="#7c90dc"/>
<polygon points="426.5,311.1 436.6,305.9 442.3,301.0 432.2,305.2" fill="#3f84e8"/>
<polygon points="578.9,310.3 589.8,330.7 593.8,339.5 583.4,311.8" fill="#f5ef9e"/>
<polygon points="609.1,388.0 619.3,415.8 622.9,423.1 612.7,400.3" fill="#08081e"/>
<polygon points="643.6,405.2 657.4,381.8 663.4,355.1 649.1,381.9" fill="#131994"/>
<polygon points="477.3,396.2 489.0,417.3 494.6,418.8 483.1,399.0" fill="#f6f0af"/>
<polygon points="379.9,369.1 388.3,355.0 394.3,348.9 385.9,364.1" fill="#08081e"/>
<polygon points="678.4,312.3 688.3,334.9 689.9,351.3 681.4,317.6" fill="#08081e"/>
<polygon points="626.2,429.3 636.9,446.1 641.1,441.9 629.8,435.2" fill="#dafecc"/>
<polygon points="447.5,312.4 459.2,329.6 465.0,329.2 453.3,309.5" fill="#ecd9bf"/>
<polygon points="494.8,433.0 506.1,446.0 511.4,442.9 500.3,433.5" fill="#e0f1d9"/>
<polygon points="567.5,307.9 578.9,310.3 583.4,311.8 572.3,300.5" fill="#c6d6e5"/>
<polygon points="585.4,324.8 596.1,350.8 600.0,361.8 589.8,330.7" fill="#e9e67e"/>
<polygon points="400.2,342.9 409.2,329.7 415.0,323.3 406.1,337.0" fill="#08081e"/>
<polygon points="506.1,446.0 517.3,452.5 522.4,444.5 511.4,442.9" fill="#abc0e8"/>
<polygon points="641.1,441.9 653.6,435.2 659.4,411.6 645.9,428.7" fill="#4747ae"/>
<polygon points="436.6,305.9 447.5,312.4 453.3,309.5 442.3,301.0" fill="#c8ccdd"/>
<polygon points="453.3,330.4 465.3,352.5 471.1,353.8 459.2,329.6" fill="#f6dfb2"/>
<polygon points="636.9,446.1 648.6,450.7 653.6,435.2 641.1,441.9" fill="#808ad4"/>
<polygon points="420.8,317.1 430.8,311.1 436.6,305.9 426.5,311.1" fill="#2e78e3"/>
<polygon points="483.3,414.6 494.8,433.0 500.3,433.5 489.0,417.3" fill="#f0f5b8"/>
<polygon points="459.3,351.4 471.3,375.2 477.2,377.6 465.3,352.5" fill="#f9e5ac"/>
<polygon points="666.1,313.7 678.4,312.3 681.4,317.6 670.7,303.2" fill="#c5dae9"/>
<polygon points="649.1,381.9 663.4,355.1 669.2,332.2 655.0,356.4" fill="#0e1694"/>
<polygon points="373.7,374.3 382.2,361.2 388.3,355.0 379.9,369.1" fill="#08081e"/>
<polygon points="685.9,324.4 695.3,352.1 696.6,370.6 688.3,334.9" fill="#08081e"/>
<polygon points="615.9,403.7 626.2,429.3 629.8,435.2 619.3,415.8" fill="#08081e"/>
<polygon points="592.0,341.5 602.5,370.2 606.2,382.3 596.1,350.8" fill="#d6da65"/>
<polygon points="465.4,372.8 477.3,396.2 483.1,399.0 471.3,375.2" fill="#f9eba9"/>
<polygon points="527.5,433.3 538.6,422.3 543.7,403.8 532.5,419.4" fill="#2b3bae"/>
<polygon points="522.4,444.5 533.5,438.6 538.6,422.3 527.5,433.3" fill="#4856bd"/>
<polygon points="645.9,428.7 659.4,411.6 665.7,383.7 651.4,407.7" fill="#2c2b9c"/>
<polygon points="562.6,318.9 574.1,313.0 578.9,310.3 567.5,307.9" fill="#7a98e3"/>
<polygon points="394.3,348.9 403.3,336.2 409.2,329.7 400.2,342.9" fill="#08081e"/>
<polygon points="532.5,419.4 543.7,403.8 548.8,384.3 537.4,403.2" fill="#1628a3"/>
<polygon points="517.3,452.5 528.4,452.0 533.5,438.6 522.4,444.5" fill="#6c7ad0"/>
<polygon points="655.0,356.4 669.2,332.2 674.3,317.1 660.7,332.4" fill="#1a27a1"/>
<polygon points="441.7,315.7 453.3,330.4 459.2,329.6 447.5,312.4" fill="#e7d9c6"/>
<polygon points="415.0,323.3 424.9,316.7 430.8,311.1 420.8,317.1" fill="#216ede"/>
<polygon points="660.7,332.4 674.3,317.1 678.4,312.3 666.1,313.7" fill="#4d60c5"/>
<polygon points="574.1,313.0 585.4,324.8 589.8,330.7 578.9,310.3" fill="#eef3c3"/>
<polygon points="430.8,311.1 441.7,315.7 447.5,312.4 436.6,305.9" fill="#bbc8e4"/>
<polygon points="598.6,358.6 609.1,388.0 612.7,400.3 602.5,370.2" fill="#08081e"/>
<polygon points="500.7,446.6 512.0,457.2 517.3,452.5 506.1,446.0" fill="#d1e9e6"/>
<polygon points="537.4,403.2 548.8,384.3 553.9,364.9 542.4,385.6" fill="#071c9d"/>
<polygon points="633.3,441.2 644.3,456.3 648.6,450.7 636.9,446.1" fill="#d4fcdd"/>
<polygon points="471.4,392.9 483.3,414.6 489.0,417.3 477.3,396.2" fill="#f5f1a9"/>
<polygon points="693.5,337.7 702.6,368.3 703.5,387.8 695.3,352.1" fill="#08081e"/>
<polygon points="367.5,379.5 376.1,367.5 382.2,361.2 373.7,374.3" fill="#08081e"/>
<polygon points="489.1,430.7 500.7,446.6 506.1,446.0 494.8,433.0" fill="#e9fac4"/>
<polygon points="557.5,333.0 569.2,320.2 574.1,313.0 562.6,318.9" fill="#3557c6"/>
<polygon points="542.4,385.6 553.9,364.9 559.1,347.0 547.5,367.3" fill="#00179b"/>
<polygon points="447.3,331.6 459.3,351.4 465.3,352.5 453.3,330.4" fill="#f3e0b8"/>
<polygon points="512.0,457.2 523.3,461.8 528.4,452.0 517.3,452.5" fill="#98aae3"/>
<polygon points="674.3,317.1 685.9,324.4 688.3,334.9 678.4,312.3" fill="#e6fbc0"/>
<polygon points="547.5,367.3 559.1,347.0 564.2,331.8 552.5,349.5" fill="#001ca0"/>
<polygon points="552.5,349.5 564.2,331.8 569.2,320.2 557.5,333.0" fill="#0f2fae"/>
<polygon points="388.3,355.0 397.3,342.9 403.3,336.2 394.3,348.9" fill="#08081e"/>
<polygon points="622.9,417.4 633.3,441.2 636.9,446.1 626.2,429.3" fill="#08081e"/>
<polygon points="651.4,407.7 665.7,383.7 671.9,356.5 657.4,381.8" fill="#212196"/>
<polygon points="644.3,456.3 656.2,460.1 661.4,443.1 648.6,450.7" fill="#7a80cd"/>
<polygon points="648.6,450.7 661.4,443.1 667.5,417.6 653.6,435.2" fill="#4b46aa"/>
<polygon points="409.2,329.7 419.1,322.5 424.9,316.7 415.0,323.3" fill="#1766da"/>
<polygon points="453.2,350.8 465.4,372.8 471.3,375.2 459.3,351.4" fill="#f8e7b0"/>
<polygon points="605.4,374.8 615.9,403.7 619.3,415.8 609.1,388.0" fill="#08081e"/>
<polygon points="477.3,411.0 489.1,430.7 494.8,433.0 483.3,414.6" fill="#eef6ab"/>
<polygon points="580.8,323.0 592.0,341.5 596.1,350.8 585.4,324.8" fill="#edf29b"/>
<polygon points="424.9,316.7 435.8,319.4 441.7,315.7 430.8,311.1" fill="#acc1e9"/>
<polygon points="361.2,384.8 369.9,373.8 376.1,367.5 367.5,379.5" fill="#08081e"/>
<polygon points="435.8,319.4 447.3,331.6 453.3,330.4 441.7,315.7" fill="#e1d8ce"/>
<polygon points="701.3,351.0 710.2,382.8 710.8,402.8 702.6,368.3" fill="#08081e"/>
<polygon points="459.2,370.6 471.4,392.9 477.3,396.2 465.4,372.8" fill="#f8edaa"/>
<polygon points="569.2,320.2 580.8,323.0 585.4,324.8 574.1,313.0" fill="#c8dbe6"/>
<polygon points="382.2,361.2 391.3,349.8 397.3,342.9 388.3,355.0" fill="#08081e"/>
<polygon points="495.0,444.7 506.6,458.6 512.0,457.2 500.7,446.6" fill="#e0fccf"/>
<polygon points="506.6,458.6 518.0,467.7 523.3,461.8 512.0,457.2" fill="#c3deec"/>
<polygon points="528.4,452.0 539.7,445.0 544.9,426.7 533.5,438.6" fill="#4b51b7"/>
<polygon points="653.6,435.2 667.5,417.6 674.1,388.0 659.4,411.6" fill="#36309c"/>
<polygon points="657.4,381.8 671.9,356.5 677.6,335.2 663.4,355.1" fill="#21259b"/>
<polygon points="403.3,336.2 413.1,328.7 419.1,322.5 409.2,329.7" fill="#1060d6"/>
<polygon points="640.8,451.8 651.9,466.2 656.2,460.1 644.3,456.3" fill="#cefbe3"/>
<polygon points="523.3,461.8 534.6,460.2 539.7,445.0 528.4,452.0" fill="#6870c7"/>
<polygon points="587.6,335.8 598.6,358.6 602.5,370.2 592.0,341.5" fill="#d9e477"/>
<polygon points="533.5,438.6 544.9,426.7 550.1,406.3 538.6,422.3" fill="#353cab"/>
<polygon points="682.4,324.0 693.5,337.7 695.3,352.1 685.9,324.4" fill="#08081e"/>
<polygon points="669.2,332.2 682.4,324.0 685.9,324.4 674.3,317.1" fill="#899de0"/>
<polygon points="441.3,333.5 453.2,350.8 459.3,351.4 447.3,331.6" fill="#f0e1bf"/>
<polygon points="465.2,389.6 477.3,411.0 483.3,414.6 471.4,392.9" fill="#f3f2a6"/>
<polygon points="612.3,389.5 622.9,417.4 626.2,429.3 615.9,403.7" fill="#08081e"/>
<polygon points="483.2,426.9 495.0,444.7 500.7,446.6 489.1,430.7" fill="#e4f9ad"/>
<polygon points="419.1,322.5 429.8,323.6 435.8,319.4 424.9,316.7" fill="#9cb8ec"/>
<polygon points="354.7,390.2 363.6,380.3 369.9,373.8 361.2,384.8" fill="#08081e"/>
<polygon points="630.1,429.2 640.8,451.8 644.3,456.3 633.3,441.2" fill="#08081e"/>
<polygon points="663.4,355.1 677.6,335.2 682.4,324.0 669.2,332.2" fill="#3842b0"/>
<polygon points="538.6,422.3 550.1,406.3 555.3,385.3 543.7,403.8" fill="#252fa4"/>
<polygon points="518.0,467.7 529.4,471.3 534.6,460.2 523.3,461.8" fill="#8e9ddc"/>
<polygon points="376.1,367.5 385.2,356.7 391.3,349.8 382.2,361.2" fill="#08081e"/>
<polygon points="429.8,323.6 441.3,333.5 447.3,331.6 435.8,319.4" fill="#d8d6d5"/>
<polygon points="651.9,466.2 663.9,470.2 669.3,452.6 656.2,460.1" fill="#7d7fcb"/>
<polygon points="564.2,331.8 576.0,326.1 580.8,323.0 569.2,320.2" fill="#7e97e1"/>
<polygon points="447.1,350.7 459.2,370.6 465.4,372.8 453.2,350.8" fill="#f6e9b6"/>
<polygon points="656.2,460.1 669.3,452.6 675.6,425.7 661.4,443.1" fill="#5249a9"/>
<polygon points="397.3,342.9 407.1,335.2 413.1,328.7 403.3,336.2" fill="#0c5cd4"/>
<polygon points="543.7,403.8 555.3,385.3 560.6,365.3 548.8,384.3" fill="#1c29a1"/>
<polygon points="594.4,349.7 605.4,374.8 609.1,388.0 598.6,358.6" fill="#08081e"/>
<polygon points="576.0,326.1 587.6,335.8 592.0,341.5 580.8,323.0" fill="#e8f7cc"/>
<polygon points="659.4,411.6 674.1,388.0 680.5,360.4 665.7,383.7" fill="#2e2999"/>
<polygon points="471.2,406.8 483.2,426.9 489.1,430.7 477.3,411.0" fill="#e9f4a1"/>
<polygon points="559.1,347.0 571.0,334.6 576.0,326.1 564.2,331.8" fill="#425ac5"/>
<polygon points="548.8,384.3 560.6,365.3 565.8,348.0 553.9,364.9" fill="#1a2ba5"/>
<polygon points="413.1,328.7 423.8,328.4 429.8,323.6 419.1,322.5" fill="#8cafed"/>
<polygon points="348.2,395.6 357.2,386.8 363.6,380.3 354.7,390.2" fill="#08081e"/>
<polygon points="501.0,457.0 512.6,469.6 518.0,467.7 506.6,458.6" fill="#d7fdd7"/>
<polygon points="690.5,332.9 701.3,351.0 702.6,368.3 693.5,337.7" fill="#08081e"/>
<polygon points="553.9,364.9 565.8,348.0 571.0,334.6 559.1,347.0" fill="#2439af"/>
<polygon points="453.0,368.8 465.2,389.6 471.4,392.9 459.2,370.6" fill="#f6efae"/>
<polygon points="369.9,373.8 379.0,363.9 385.2,356.7 376.1,367.5" fill="#08081e"/>
<polygon points="512.6,469.6 524.2,477.9 529.4,471.3 518.0,467.7" fill="#bbd7ee"/>
<polygon points="489.1,440.8 501.0,457.0 506.6,458.6 495.0,444.7" fill="#d7f9ad"/>
<polygon points="435.2,335.9 447.1,350.7 453.2,350.8 441.3,333.5" fill="#eae2c8"/>
<polygon points="619.5,402.3 630.1,429.2 633.3,441.2 622.9,417.4" fill="#08081e"/>
<polygon points="648.5,461.2 659.7,475.7 663.9,470.2 651.9,466.2" fill="#c8fedd"/>
<polygon points="391.3,349.8 401.0,341.9 407.1,335.2 397.3,342.9" fill="#0c5ad3"/>
<polygon points="529.4,471.3 540.9,469.5 546.2,453.0 534.6,460.2" fill="#6b6dc2"/>
<polygon points="661.4,443.1 675.6,425.7 682.5,394.8 667.5,417.6" fill="#40359d"/>
<polygon points="534.6,460.2 546.2,453.0 551.4,433.0 539.7,445.0" fill="#5252b3"/>
<polygon points="677.6,335.2 690.5,332.9 693.5,337.7 682.4,324.0" fill="#bdd6ec"/>
<polygon points="423.8,328.4 435.2,335.9 441.3,333.5 429.8,323.6" fill="#ced3dd"/>
<polygon points="601.4,363.6 612.3,389.5 615.9,403.7 605.4,374.8" fill="#08081e"/>
<polygon points="637.7,439.2 648.5,461.2 651.9,466.2 640.8,451.8" fill="#08081e"/>
<polygon points="665.7,383.7 680.5,360.4 686.1,340.7 671.9,356.5" fill="#3332a1"/>
<polygon points="539.7,445.0 551.4,433.0 556.7,411.0 544.9,426.7" fill="#4141aa"/>
<polygon points="458.9,386.4 471.2,406.8 477.3,411.0 465.2,389.6" fill="#f0f4a6"/>
<polygon points="524.2,477.9 535.7,481.4 540.9,469.5 529.4,471.3" fill="#8d98d9"/>
<polygon points="582.9,335.1 594.4,349.7 598.6,358.6 587.6,335.8" fill="#e4f7a5"/>
<polygon points="407.1,335.2 417.7,333.6 423.8,328.4 413.1,328.7" fill="#7ca4ec"/>
<polygon points="341.6,401.2 350.7,393.5 357.2,386.8 348.2,395.6" fill="#003ebf"/>
<polygon points="477.1,422.1 489.1,440.8 495.0,444.7 483.2,426.9" fill="#d9f399"/>
<polygon points="659.7,475.7 671.8,480.9 677.2,463.8 663.9,470.2" fill="#8487ce"/>
<polygon points="363.6,380.3 372.8,371.2 379.0,363.9 369.9,373.8" fill="#0039bd"/>
<polygon points="571.0,334.6 582.9,335.1 587.6,335.8 576.0,326.1" fill="#b7cdea"/>
<polygon points="440.8,351.3 453.0,368.8 459.2,370.6 447.1,350.7" fill="#f2ebbe"/>
<polygon points="663.9,470.2 677.2,463.8 683.7,436.2 669.3,452.6" fill="#5a4eaa"/>
<polygon points="671.9,356.5 686.1,340.7 690.5,332.9 677.6,335.2" fill="#545cbd"/>
<polygon points="385.2,356.7 394.9,349.0 401.0,341.9 391.3,349.8" fill="#0e5ad3"/>
<polygon points="698.8,342.8 709.3,363.5 710.2,382.8 701.3,351.0" fill="#08081e"/>
<polygon points="544.9,426.7 556.7,411.0 562.1,388.8 550.1,406.3" fill="#3537a5"/>
<polygon points="507.0,468.0 518.7,480.0 524.2,477.9 512.6,469.6" fill="#cefed9"/>
<polygon points="417.7,333.6 429.0,339.1 435.2,335.9 423.8,328.4" fill="#c0cde3"/>
<polygon points="429.0,339.1 440.8,351.3 447.1,350.7 435.2,335.9" fill="#e3e1d1"/>
<polygon points="495.1,452.8 507.0,468.0 512.6,469.6 501.0,457.0" fill="#c5f5a6"/>
<polygon points="667.5,417.6 682.5,394.8 689.1,366.6 674.1,388.0" fill="#3a319b"/>
<polygon points="518.7,480.0 530.4,488.1 535.7,481.4 524.2,477.9" fill="#b9d7ef"/>
<polygon points="401.0,341.9 411.5,339.3 417.7,333.6 407.1,335.2" fill="#6e9aeb"/>
<polygon points="627.0,413.2 637.7,439.2 640.8,451.8 630.1,429.2" fill="#08081e"/>
<polygon points="464.8,402.5 477.1,422.1 483.2,426.9 471.2,406.8" fill="#e3f39b"/>
<polygon points="550.1,406.3 562.1,388.8 567.4,368.4 555.3,385.3" fill="#2f35a6"/>
<polygon points="334.9,406.8 344.1,400.2 350.7,393.5 341.6,401.2" fill="#0052cd"/>
<polygon points="446.6,367.6 458.9,386.4 465.2,389.6 453.0,368.8" fill="#f3f2b5"/>
<polygon points="357.2,386.8 366.5,378.6 372.8,371.2 363.6,380.3" fill="#0046c7"/>
<polygon points="608.6,376.4 619.5,402.3 622.9,417.4 612.3,389.5" fill="#08081e"/>
<polygon points="565.8,348.0 577.9,340.5 582.9,335.1 571.0,334.6" fill="#7084d6"/>
<polygon points="379.0,363.9 388.7,356.3 394.9,349.0 385.2,356.7" fill="#125cd4"/>
<polygon points="686.1,340.7 698.8,342.8 701.3,351.0 690.5,332.9" fill="#d7f9e0"/>
<polygon points="589.9,345.9 601.4,363.6 605.4,374.8 594.4,349.7" fill="#cce67e"/>
<polygon points="656.5,469.2 667.8,484.7 671.8,480.9 659.7,475.7" fill="#a0dc6e"/>
<polygon points="535.7,481.4 547.4,480.1 552.7,462.8 540.9,469.5" fill="#716ec0"/>
<polygon points="669.3,452.6 683.7,436.2 690.9,403.9 675.6,425.7" fill="#493b9e"/>
<polygon points="555.3,385.3 567.4,368.4 572.8,351.9 560.6,365.3" fill="#323cac"/>
<polygon points="540.9,469.5 552.7,462.8 558.1,441.5 546.2,453.0" fill="#5b55b2"/>
<polygon points="483.0,435.4 495.1,452.8 501.0,457.0 489.1,440.8" fill="#c2ea8b"/>
<polygon points="560.6,365.3 572.8,351.9 577.9,340.5 565.8,348.0" fill="#4453bc"/>
<polygon points="645.7,447.3 656.5,469.2 659.7,475.7 648.5,461.2" fill="#08081e"/>
<polygon points="530.4,488.1 542.2,492.2 547.4,480.1 535.7,481.4" fill="#919ad8"/>
<polygon points="577.9,340.5 589.9,345.9 594.4,349.7 582.9,335.1" fill="#d8f1e2"/>
<polygon points="434.5,352.6 446.6,367.6 453.0,368.8 440.8,351.3" fill="#edecc7"/>
<polygon points="411.5,339.3 422.7,342.9 429.0,339.1 417.7,333.6" fill="#b2c4e8"/>
<polygon points="546.2,453.0 558.1,441.5 563.5,418.0 551.4,433.0" fill="#4c46aa"/>
<polygon points="394.9,349.0 405.3,345.6 411.5,339.3 401.0,341.9" fill="#6291e8"/>
<polygon points="350.7,393.5 360.1,386.2 366.5,378.6 357.2,386.8" fill="#0154cf"/>
<polygon points="452.5,383.6 464.8,402.5 471.2,406.8 458.9,386.4" fill="#edf6aa"/>
<polygon points="674.1,388.0 689.1,366.6 694.7,347.9 680.5,360.4" fill="#413da5"/>
<polygon points="328.1,412.5 337.5,407.0 344.1,400.2 334.9,406.8" fill="#0a64d9"/>
<polygon points="372.8,371.2 382.5,364.0 388.7,356.3 379.0,363.9" fill="#195fd5"/>
<polygon points="422.7,342.9 434.5,352.6 440.8,351.3 429.0,339.1" fill="#d9ddd9"/>
<polygon points="680.5,360.4 694.7,347.9 698.8,342.8 686.1,340.7" fill="#6b72c8"/>
<polygon points="470.7,416.8 483.0,435.4 489.1,440.8 477.1,422.1" fill="#ccec8b"/>
<polygon points="513.1,477.8 525.0,489.6 530.4,488.1 518.7,480.0" fill="#c1fed0"/>
<polygon points="597.0,357.1 608.6,376.4 612.3,389.5 601.4,363.6" fill="#08081e"/>
<polygon points="616.0,387.9 627.0,413.2 630.1,429.2 619.5,402.3" fill="#08081e"/>
<polygon points="551.4,433.0 563.5,418.0 569.0,394.7 556.7,411.0" fill="#433fa6"/>
<polygon points="501.1,463.2 513.1,477.8 518.7,480.0 507.0,468.0" fill="#aae793"/>
<polygon points="525.0,489.6 536.9,498.2 542.2,492.2 530.4,488.1" fill="#bce1f2"/>
<polygon points="675.6,425.7 690.9,403.9 697.7,374.7 682.5,394.8" fill="#44379d"/>
<polygon points="388.7,356.3 399.1,352.3 405.3,345.6 394.9,349.0" fill="#598ae5"/>
<polygon points="634.8,422.1 645.7,447.3 648.5,461.2 637.7,439.2" fill="#08081e"/>
<polygon points="344.1,400.2 353.6,393.9 360.1,386.2 350.7,393.5" fill="#1661d7"/>
<polygon points="440.2,367.2 452.5,383.6 458.9,386.4 446.6,367.6" fill="#f0f4be"/>
<polygon points="694.7,347.9 707.3,352.7 709.3,363.5 698.8,342.8" fill="#d2fec2"/>
<polygon points="366.5,378.6 376.2,371.9 382.5,364.0 372.8,371.2" fill="#2264d7"/>
<polygon points="542.2,492.2 554.1,492.0 559.4,474.6 547.4,480.1" fill="#7873c1"/>
<polygon points="405.3,345.6 416.4,347.4 422.7,342.9 411.5,339.3" fill="#a2baea"/>
<polygon points="572.8,351.9 585.0,348.4 589.9,345.9 577.9,340.5" fill="#94a7e3"/>
<polygon points="321.2,418.3 330.7,414.0 337.5,407.0 328.1,412.5" fill="#2475e2"/>
<polygon points="488.9,446.7 501.1,463.2 507.0,468.0 495.1,452.8" fill="#a1d875"/>
<polygon points="547.4,480.1 559.4,474.6 564.9,452.4 552.7,462.8" fill="#645ab1"/>
<polygon points="458.3,398.4 470.7,416.8 477.1,422.1 464.8,402.5" fill="#dcf39b"/>
<polygon points="556.7,411.0 569.0,394.7 574.5,373.9 562.1,388.8" fill="#403fa8"/>
<polygon points="585.0,348.4 597.0,357.1 601.4,363.6 589.9,345.9" fill="#defecb"/>
<polygon points="428.1,354.8 440.2,367.2 446.6,367.6 434.5,352.6" fill="#e6ead2"/>
<polygon points="536.9,498.2 548.8,503.3 554.1,492.0 542.2,492.2" fill="#99a4dd"/>
<polygon points="416.4,347.4 428.1,354.8 434.5,352.6 422.7,342.9" fill="#cdd7e1"/>
<polygon points="567.4,368.4 579.9,358.0 585.0,348.4 572.8,351.9" fill="#5d68c5"/>
<polygon points="562.1,388.8 574.5,373.9 579.9,358.0 567.4,368.4" fill="#464ab1"/>
<polygon points="382.5,364.0 392.8,359.6 399.1,352.3 388.7,356.3" fill="#5484e3"/>
<polygon points="552.7,462.8 564.9,452.4 570.5,427.6 558.1,441.5" fill="#574ca9"/>
<polygon points="337.5,407.0 347.1,401.8 353.6,393.9 344.1,400.2" fill="#2a6edd"/>
<polygon points="360.1,386.2 369.9,380.0 376.2,371.9 366.5,378.6" fill="#2d6ada"/>
<polygon points="654.0,453.5 665.0,475.7 667.8,484.7 656.5,469.2" fill="#08081e"/>
<polygon points="476.6,429.2 488.9,446.7 495.1,452.8 483.0,435.4" fill="#abda73"/>
<polygon points="682.5,394.8 697.7,374.7 703.4,356.2 689.1,366.6" fill="#4c45a8"/>
<polygon points="445.9,381.7 458.3,398.4 464.8,402.5 452.5,383.6" fill="#e9f9b3"/>
<polygon points="399.1,352.3 410.1,352.8 416.4,347.4 405.3,345.6" fill="#93b0ea"/>
<polygon points="604.4,368.0 616.0,387.9 619.5,402.3 608.6,376.4" fill="#08081e"/>
<polygon points="689.1,366.6 703.4,356.2 707.3,352.7 694.7,347.9" fill="#7a82cf"/>
<polygon points="623.6,397.6 634.8,422.1 637.7,439.2 627.0,413.2" fill="#08081e"/>
<polygon points="519.4,486.2 531.4,498.3 536.9,498.2 525.0,489.6" fill="#a2efb0"/>
<polygon points="558.1,441.5 570.5,427.6 576.1,403.0 563.5,418.0" fill="#4f45a7"/>
<polygon points="548.8,503.3 560.9,504.8 566.3,488.1 554.1,492.0" fill="#827cc4"/>
<polygon points="376.2,371.9 386.5,367.3 392.8,359.6 382.5,364.0" fill="#5281e1"/>
<polygon points="464.2,411.6 476.6,429.2 483.0,435.4 470.7,416.8" fill="#c0e785"/>
<polygon points="507.2,472.0 519.4,486.2 525.0,489.6 513.1,477.8" fill="#80c96f"/>
<polygon points="353.6,393.9 363.5,388.5 369.9,380.0 360.1,386.2" fill="#3971dc"/>
<polygon points="433.6,367.8 445.9,381.7 452.5,383.6 440.2,367.2" fill="#eaf5ca"/>
<polygon points="531.4,498.3 543.5,507.7 548.8,503.3 536.9,498.2" fill="#bdf4f0"/>
<polygon points="330.7,414.0 340.5,409.8 347.1,401.8 337.5,407.0" fill="#3e7ae2"/>
<polygon points="554.1,492.0 566.3,488.1 571.8,465.5 559.4,474.6" fill="#6d60b2"/>
<polygon points="410.1,352.8 421.6,358.0 428.1,354.8 416.4,347.4" fill="#becee6"/>
<polygon points="579.9,358.0 592.3,357.5 597.0,357.1 585.0,348.4" fill="#adc3ea"/>
<polygon points="421.6,358.0 433.6,367.8 440.2,367.2 428.1,354.8" fill="#dbe6dc"/>
<polygon points="643.0,429.0 654.0,453.5 656.5,469.2 645.7,447.3" fill="#08081e"/>
<polygon points="592.3,357.5 604.4,368.0 608.6,376.4 597.0,357.1" fill="#d0f9ad"/>
<polygon points="494.9,456.2 507.2,472.0 513.1,477.8 501.1,463.2" fill="#76b954"/>
<polygon points="392.8,359.6 403.7,358.9 410.1,352.8 399.1,352.3" fill="#86a5e8"/>
<polygon points="543.5,507.7 555.6,514.3 560.9,504.8 548.8,503.3" fill="#a6bae7"/>
<polygon points="563.5,418.0 576.1,403.0 581.7,381.5 569.0,394.7" fill="#4d47aa"/>
<polygon points="559.4,474.6 571.8,465.5 577.5,439.6 564.9,452.4" fill="#6051a9"/>
<polygon points="451.7,395.1 464.2,411.6 470.7,416.8 458.3,398.4" fill="#d8f6a2"/>
<polygon points="369.9,380.0 380.1,375.6 386.5,367.3 376.2,371.9" fill="#547fdf"/>
<polygon points="347.1,401.8 357.0,397.1 363.5,388.5 353.6,393.9" fill="#4677dd"/>
<polygon points="482.5,439.5 494.9,456.2 501.1,463.2 488.9,446.7" fill="#81bd54"/>
<polygon points="574.5,373.9 587.1,365.7 592.3,357.5 579.9,358.0" fill="#6f78cb"/>
<polygon points="569.0,394.7 581.7,381.5 587.1,365.7 574.5,373.9" fill="#5454b4"/>
<polygon points="611.9,378.1 623.6,397.6 627.0,413.2 616.0,387.9" fill="#08081e"/>
<polygon points="403.7,358.9 415.1,362.2 421.6,358.0 410.1,352.8" fill="#aec3e9"/>
<polygon points="386.5,367.3 397.3,365.7 403.7,358.9 392.8,359.6" fill="#7b9be6"/>
<polygon points="439.2,380.8 451.7,395.1 458.3,398.4 445.9,381.7" fill="#e5fcc0"/>
<polygon points="560.9,504.8 573.3,502.9 578.9,480.9 566.3,488.1" fill="#7667b4"/>
<polygon points="555.6,514.3 567.8,517.9 573.3,502.9 560.9,504.8" fill="#8d8bcb"/>
<polygon points="363.5,388.5 373.7,384.2 380.1,375.6 369.9,380.0" fill="#577fde"/>
<polygon points="470.0,422.9 482.5,439.5 488.9,446.7 476.6,429.2" fill="#99ce67"/>
<polygon points="564.9,452.4 577.5,439.6 583.3,413.6 570.5,427.6" fill="#594ba7"/>
<polygon points="340.5,409.8 350.5,406.0 357.0,397.1 347.1,401.8" fill="#537fdf"/>
<polygon points="415.1,362.2 427.0,369.6 433.6,367.8 421.6,358.0" fill="#cedee4"/>
<polygon points="427.0,369.6 439.2,380.8 445.9,381.7 433.6,367.8" fill="#e2f3d8"/>
<polygon points="631.6,405.7 643.0,429.0 645.7,447.3 634.8,422.1" fill="#08081e"/>
<polygon points="525.8,493.0 538.0,505.6 543.5,507.7 531.4,498.3" fill="#67be6e"/>
<polygon points="599.7,366.9 611.9,378.1 616.0,387.9 604.4,368.0" fill="#b8ea91"/>
<polygon points="587.1,365.7 599.7,366.9 604.4,368.0 592.3,357.5" fill="#bbd6ed"/>
<polygon points="538.0,505.6 550.3,516.1 555.6,514.3 543.5,507.7" fill="#a0f4ca"/>
<polygon points="566.3,488.1 578.9,480.9 584.7,454.2 571.8,465.5" fill="#6956aa"/>
<polygon points="513.5,478.9 525.8,493.0 531.4,498.3 519.4,486.2" fill="#08081e"/>
<polygon points="380.1,375.6 390.9,373.3 397.3,365.7 386.5,367.3" fill="#7594e3"/>
<polygon points="457.5,407.0 470.0,422.9 476.6,429.2 464.2,411.6" fill="#b8e789"/>
<polygon points="397.3,365.7 408.6,367.4 415.1,362.2 403.7,358.9" fill="#9fb6e9"/>
<polygon points="357.0,397.1 367.3,393.3 373.7,384.2 363.5,388.5" fill="#5d81dd"/>
<polygon points="550.3,516.1 562.6,524.4 567.8,517.9 555.6,514.3" fill="#b4e0f5"/>
<polygon points="501.0,463.7 513.5,478.9 519.4,486.2 507.2,472.0" fill="#08081e"/>
<polygon points="570.5,427.6 583.3,413.6 589.1,390.8 576.1,403.0" fill="#574caa"/>
<polygon points="651.7,433.9 662.9,457.6 665.0,475.7 654.0,453.5" fill="#08081e"/>
<polygon points="567.8,517.9 580.3,518.4 586.0,498.0 573.3,502.9" fill="#8071b9"/>
<polygon points="444.9,392.9 457.5,407.0 464.2,411.6 451.7,395.1" fill="#d5fab1"/>
<polygon points="581.7,381.5 594.6,374.6 599.7,366.9 587.1,365.7" fill="#7a80cd"/>
<polygon points="488.5,447.9 501.0,463.7 507.2,472.0 494.9,456.2" fill="#08081e"/>
<polygon points="408.6,367.4 420.4,372.6 427.0,369.6 415.1,362.2" fill="#bdd1e9"/>
<polygon points="576.1,403.0 589.1,390.8 594.6,374.6 581.7,381.5" fill="#5e5ab4"/>
<polygon points="619.8,387.2 631.6,405.7 634.8,422.1 623.6,397.6" fill="#08081e"/>
<polygon points="373.7,384.2 384.4,381.7 390.9,373.3 380.1,375.6" fill="#718edf"/>
<polygon points="571.8,465.5 584.7,454.2 590.6,426.6 577.5,439.6" fill="#614fa6"/>
<polygon points="350.5,406.0 360.9,402.8 367.3,393.3 357.0,397.1" fill="#6483dc"/>
<polygon points="562.6,524.4 575.0,530.2 580.3,518.4 567.8,517.9" fill="#9da6db"/>
<polygon points="432.5,381.2 444.9,392.9 451.7,395.1 439.2,380.8" fill="#dffcd2"/>
<polygon points="420.4,372.6 432.5,381.2 439.2,380.8 427.0,369.6" fill="#d5ebe3"/>
<polygon points="573.3,502.9 586.0,498.0 591.9,471.3 578.9,480.9" fill="#715cab"/>
<polygon points="390.9,373.3 402.1,373.7 408.6,367.4 397.3,365.7" fill="#92aae6"/>
<polygon points="475.9,432.2 488.5,447.9 494.9,456.2 482.5,439.5" fill="#6aac45"/>
<polygon points="607.3,376.4 619.8,387.2 623.6,397.6 611.9,378.1" fill="#08081e"/>
<polygon points="594.6,374.6 607.3,376.4 611.9,378.1 599.7,366.9" fill="#bfdfef"/>
<polygon points="367.3,393.3 378.0,390.7 384.4,381.7 373.7,384.2" fill="#718bdd"/>
<polygon points="640.0,412.2 651.7,433.9 654.0,453.5 643.0,429.0" fill="#08081e"/>
<polygon points="463.3,417.3 475.9,432.2 482.5,439.5 470.0,422.9" fill="#8ecc69"/>
<polygon points="577.5,439.6 590.6,426.6 596.5,402.1 583.3,413.6" fill="#5f50a9"/>
<polygon points="402.1,373.7 413.7,377.0 420.4,372.6 408.6,367.4" fill="#adc2e9"/>
<polygon points="575.0,530.2 587.6,533.5 593.2,516.2 580.3,518.4" fill="#8c82c3"/>
<polygon points="384.4,381.7 395.6,381.1 402.1,373.7 390.9,373.3" fill="#889fe2"/>
<polygon points="532.4,497.8 544.9,510.8 550.3,516.1 538.0,505.6" fill="#08081e"/>
<polygon points="544.9,510.8 557.3,522.4 562.6,524.4 550.3,516.1" fill="#45a65c"/>
<polygon points="578.9,480.9 591.9,471.3 598.0,442.2 584.7,454.2" fill="#6953a6"/>
<polygon points="580.3,518.4 593.2,516.2 599.1,490.6 586.0,498.0" fill="#7964ae"/>
<polygon points="519.9,483.8 532.4,497.8 538.0,505.6 525.8,493.0" fill="#08081e"/>
<polygon points="450.6,403.8 463.3,417.3 470.0,422.9 457.5,407.0" fill="#b7ed9a"/>
<polygon points="557.3,522.4 569.8,532.3 575.0,530.2 562.6,524.4" fill="#8fedc9"/>
<polygon points="360.9,402.8 371.6,400.4 378.0,390.7 367.3,393.3" fill="#7389da"/>
<polygon points="413.7,377.0 425.8,383.3 432.5,381.2 420.4,372.6" fill="#c5ddea"/>
<polygon points="589.1,390.8 602.2,384.5 607.3,376.4 594.6,374.6" fill="#7f82cc"/>
<polygon points="583.3,413.6 596.5,402.1 602.2,384.5 589.1,390.8" fill="#655cb3"/>
<polygon points="507.3,469.1 519.9,483.8 525.8,493.0 513.5,478.9" fill="#08081e"/>
<polygon points="438.1,392.3 450.6,403.8 457.5,407.0 444.9,392.9" fill="#d3ffc8"/>
<polygon points="425.8,383.3 438.1,392.3 444.9,392.9 432.5,381.2" fill="#d6f6e2"/>
<polygon points="569.8,532.3 582.4,540.4 587.6,533.5 575.0,530.2" fill="#b0ddf6"/>
<polygon points="627.9,395.4 640.0,412.2 643.0,429.0 631.6,405.7" fill="#08081e"/>
<polygon points="378.0,390.7 389.1,389.6 395.6,381.1 384.4,381.7" fill="#8296de"/>
<polygon points="494.6,454.2 507.3,469.1 513.5,478.9 501.0,463.7" fill="#08081e"/>
<polygon points="395.6,381.1 407.1,382.9 413.7,377.0 402.1,373.7" fill="#9eb3e6"/>
<polygon points="586.0,498.0 599.1,490.6 605.4,460.6 591.9,471.3" fill="#6f58a6"/>
<polygon points="587.6,533.5 600.5,534.3 606.4,511.5 593.2,516.2" fill="#826fb4"/>
<polygon points="584.7,454.2 598.0,442.2 604.1,415.4 590.6,426.6" fill="#6552a7"/>
<polygon points="602.2,384.5 615.2,385.9 619.8,387.2 607.3,376.4" fill="#bbdbf0"/>
<polygon points="481.9,439.7 494.6,454.2 501.0,463.7 488.5,447.9" fill="#08081e"/>
<polygon points="615.2,385.9 627.9,395.4 631.6,405.7 619.8,387.2" fill="#08081e"/>
<polygon points="582.4,540.4 595.1,546.5 600.5,534.3 587.6,533.5" fill="#9ea4da"/>
<polygon points="371.6,400.4 382.6,399.1 389.1,389.6 378.0,390.7" fill="#8090da"/>
<polygon points="407.1,382.9 419.0,387.0 425.8,383.3 413.7,377.0" fill="#b4cbeb"/>
<polygon points="469.1,425.8 481.9,439.7 488.5,447.9 475.9,432.2" fill="#61ab49"/>
<polygon points="389.1,389.6 400.5,390.2 407.1,382.9 395.6,381.1" fill="#93a5e1"/>
<polygon points="593.2,516.2 606.4,511.5 612.8,481.6 599.1,490.6" fill="#765da8"/>
<polygon points="590.6,426.6 604.1,415.4 609.9,395.5 596.5,402.1" fill="#695cb0"/>
<polygon points="648.8,417.5 660.8,437.1 662.9,457.6 651.7,433.9" fill="#08081e"/>
<polygon points="456.4,413.3 469.1,425.8 475.9,432.2 463.3,417.3" fill="#91d67f"/>
<polygon points="419.0,387.0 431.3,393.6 438.1,392.3 425.8,383.3" fill="#c7e6ed"/>
<polygon points="596.5,402.1 609.9,395.5 615.2,385.9 602.2,384.5" fill="#7e7dc7"/>
<polygon points="443.7,402.4 456.4,413.3 463.3,417.3 450.6,403.8" fill="#bdf9ba"/>
<polygon points="431.3,393.6 443.7,402.4 450.6,403.8 438.1,392.3" fill="#cffce1"/>
<polygon points="591.9,471.3 605.4,460.6 611.8,431.2 598.0,442.2" fill="#6b54a5"/>
<polygon points="595.1,546.5 608.0,550.5 613.7,532.8 600.5,534.3" fill="#8f83c2"/>
<polygon points="552.0,513.3 564.7,525.7 569.8,532.3 557.3,522.4" fill="#08081e"/>
<polygon points="564.7,525.7 577.4,537.1 582.4,540.4 569.8,532.3" fill="#08081e"/>
<polygon points="539.3,500.1 552.0,513.3 557.3,522.4 544.9,510.8" fill="#08081e"/>
<polygon points="382.6,399.1 394.0,399.0 400.5,390.2 389.1,389.6" fill="#8c9adc"/>
<polygon points="600.5,534.3 613.7,532.8 620.1,504.9 606.4,511.5" fill="#7e65ab"/>
<polygon points="400.5,390.2 412.3,392.7 419.0,387.0 407.1,382.9" fill="#a4b8e7"/>
<polygon points="526.5,486.3 539.3,500.1 544.9,510.8 532.4,497.8" fill="#08081e"/>
<polygon points="577.4,537.1 590.1,547.1 595.1,546.5 582.4,540.4" fill="#53c08a"/>
<polygon points="636.3,403.2 648.8,417.5 651.7,433.9 640.0,412.2" fill="#08081e"/>
<polygon points="513.7,472.4 526.5,486.3 532.4,497.8 519.9,483.8" fill="#08081e"/>
<polygon points="609.9,395.5 623.3,395.7 627.9,395.4 615.2,385.9" fill="#b0caed"/>
<polygon points="599.1,490.6 612.8,481.6 619.4,450.0 605.4,460.6" fill="#7057a4"/>
<polygon points="590.1,547.1 603.0,555.8 608.0,550.5 595.1,546.5" fill="#a7f0f5"/>
<polygon points="500.8,458.6 513.7,472.4 519.9,483.8 507.3,469.1" fill="#08081e"/>
<polygon points="623.3,395.7 636.3,403.2 640.0,412.2 627.9,395.4" fill="#08081e"/>
<polygon points="598.0,442.2 611.8,431.2 617.8,408.1 604.1,415.4" fill="#6d5aac"/>
<polygon points="412.3,392.7 424.4,397.1 431.3,393.6 419.0,387.0" fill="#b5d0ed"/>
<polygon points="608.0,550.5 621.3,552.5 627.4,529.2 613.7,532.8" fill="#8772b3"/>
<polygon points="487.9,445.3 500.8,458.6 507.3,469.1 494.6,454.2" fill="#08081e"/>
<polygon points="394.0,399.0 405.7,400.2 412.3,392.7 400.5,390.2" fill="#98a7e0"/>
<polygon points="604.1,415.4 617.8,408.1 623.3,395.7 609.9,395.5" fill="#7c74bf"/>
<polygon points="424.4,397.1 436.8,403.4 443.7,402.4 431.3,393.6" fill="#c3ebf0"/>
<polygon points="603.0,555.8 616.0,562.9 621.3,552.5 608.0,550.5" fill="#a6b9e6"/>
<polygon points="606.4,511.5 620.1,504.9 626.9,472.0 612.8,481.6" fill="#765aa4"/>
<polygon points="475.0,432.8 487.9,445.3 494.6,454.2 481.9,439.7" fill="#08081e"/>
<polygon points="436.8,403.4 449.4,411.6 456.4,413.3 443.7,402.4" fill="#c3fddf"/>
<polygon points="462.2,421.5 475.0,432.8 481.9,439.7 469.1,425.8" fill="#6bbd67"/>
<polygon points="449.4,411.6 462.2,421.5 469.1,425.8 456.4,413.3" fill="#a2edac"/>
<polygon points="613.7,532.8 627.4,529.2 634.3,497.0 620.1,504.9" fill="#7c5fa6"/>
<polygon points="605.4,460.6 619.4,450.0 625.8,423.0 611.8,431.2" fill="#7059a8"/>
<polygon points="405.7,400.2 417.7,402.9 424.4,397.1 412.3,392.7" fill="#a5b8e6"/>
<polygon points="617.8,408.1 631.5,406.4 636.3,403.2 623.3,395.7" fill="#a0ade0"/>
<polygon points="417.7,402.9 430.0,407.1 436.8,403.4 424.4,397.1" fill="#b2cfee"/>
<polygon points="611.8,431.2 625.8,423.0 631.5,406.4 617.8,408.1" fill="#796ab6"/>
<polygon points="644.9,411.2 657.9,422.4 660.8,437.1 648.8,417.5" fill="#08081e"/>
<polygon points="572.5,525.2 585.5,537.4 590.1,547.1 577.4,537.1" fill="#08081e"/>
<polygon points="631.5,406.4 644.9,411.2 648.8,417.5 636.3,403.2" fill="#aef9ce"/>
<polygon points="559.5,512.6 572.5,525.2 577.4,537.1 564.7,525.7" fill="#08081e"/>
<polygon points="612.8,481.6 626.9,472.0 633.7,441.0 619.4,450.0" fill="#7359a5"/>
<polygon points="585.5,537.4 598.5,548.9 603.0,555.8 590.1,547.1" fill="#08081e"/>
<polygon points="546.5,499.6 559.5,512.6 564.7,525.7 552.0,513.3" fill="#08081e"/>
<polygon points="598.5,548.9 611.5,559.6 616.0,562.9 603.0,555.8" fill="#08081e"/>
<polygon points="533.4,486.6 546.5,499.6 552.0,513.3 539.3,500.1" fill="#08081e"/>
<polygon points="430.0,407.1 442.5,412.8 449.4,411.6 436.8,403.4" fill="#bdeaf3"/>
<polygon points="520.3,473.7 533.4,486.6 539.3,500.1 526.5,486.3" fill="#08081e"/>
<polygon points="620.1,504.9 634.3,497.0 641.4,462.8 626.9,472.0" fill="#7759a3"/>
<polygon points="507.2,461.2 520.3,473.7 526.5,486.3 513.7,472.4" fill="#08081e"/>
<polygon points="442.5,412.8 455.2,420.0 462.2,421.5 449.4,411.6" fill="#b7fbe3"/>
<polygon points="494.1,449.4 507.2,461.2 513.7,472.4 500.8,458.6" fill="#08081e"/>
<polygon points="455.2,420.0 468.1,428.6 475.0,432.8 462.2,421.5" fill="#8de5aa"/>
<polygon points="481.1,438.5 494.1,449.4 500.8,458.6 487.9,445.3" fill="#08081e"/>
<polygon points="468.1,428.6 481.1,438.5 487.9,445.3 475.0,432.8" fill="#4fac5c"/>
<polygon points="619.4,450.0 633.7,441.0 639.8,419.2 625.8,423.0" fill="#7763ae"/>
<polygon points="625.8,423.0 639.8,419.2 644.9,411.2 631.5,406.4" fill="#8f8dcd"/>
<polygon points="639.8,419.2 653.8,420.7 657.9,422.4 644.9,411.2" fill="#b8e4f4"/>
<polygon points="626.9,472.0 641.4,462.8 648.1,435.0 633.7,441.0" fill="#775da8"/>
<polygon points="633.7,441.0 648.1,435.0 653.8,420.7 639.8,419.2" fill="#8476bb"/>
</g>
<g stroke="#000" stroke-width="1" fill="none" shape-rendering="crispEdges">
<path d="M329.0 465.2L610.8 571.1"/>
<path d="M312.9 367.8L617.0 469.2"/>
<path d="M610.8 571.1L617.0 469.2"/>
<path d="M610.8 571.1L732.2 392.9"/>
<path d="M617.0 469.2L745.5 299.8"/>
<path d="M329.0 465.2L331.6 462.8"/>
<path d="M341.5 469.9L343.0 468.5"/>
<path d="M354.2 474.6L355.7 473.2"/>
<path d="M367.0 479.5L368.5 478.0"/>
<path d="M380.0 484.3L381.5 482.9"/>
<path d="M393.2 489.3L395.6 486.8"/>
<path d="M406.5 494.3L407.9 492.8"/>
<path d="M419.9 499.3L421.4 497.8"/>
<path d="M433.5 504.5L435.0 502.9"/>
<path d="M447.3 509.6L448.7 508.1"/>
<path d="M461.3 514.9L463.6 512.3"/>
<path d="M475.4 520.2L476.8 518.6"/>
<path d="M489.7 525.6L491.1 524.0"/>
<path d="M504.2 531.0L505.5 529.4"/>
<path d="M518.9 536.5L520.2 534.9"/>
<path d="M533.7 542.1L535.9 539.3"/>
<path d="M548.7 547.7L550.0 546.1"/>
<path d="M564.0 553.5L565.2 551.8"/>
<path d="M579.4 559.3L580.6 557.5"/>
<path d="M595.0 565.1L596.2 563.4"/>
<path d="M610.8 571.1L612.8 568.1"/>
<path d="M610.8 571.1L606.5 569.5"/>
<path d="M618.3 560.2L615.7 559.2"/>
<path d="M625.5 549.5L623.0 548.6"/>
<path d="M632.6 539.1L630.1 538.2"/>
<path d="M639.5 528.9L637.1 528.0"/>
<path d="M646.3 519.0L642.2 517.5"/>
<path d="M652.9 509.2L650.5 508.4"/>
<path d="M659.4 499.7L657.0 498.9"/>
<path d="M665.8 490.4L663.4 489.6"/>
<path d="M672.0 481.3L669.6 480.6"/>
<path d="M678.0 472.4L674.1 471.1"/>
<path d="M684.0 463.7L681.6 463.0"/>
<path d="M689.8 455.2L687.5 454.5"/>
<path d="M695.5 446.8L693.2 446.1"/>
<path d="M701.0 438.6L698.8 437.9"/>
<path d="M706.5 430.6L702.7 429.5"/>
<path d="M711.8 422.8L709.6 422.1"/>
<path d="M717.1 415.1L714.9 414.4"/>
<path d="M722.2 407.5L720.0 406.9"/>
<path d="M727.3 400.1L725.1 399.5"/>
<path d="M732.2 392.9L728.6 391.8"/>
<path d="M329.0 465.2L331.6 462.8"/>
<path d="M328.2 460.6L329.8 459.2"/>
<path d="M327.4 456.0L329.0 454.7"/>
<path d="M326.7 451.4L328.3 450.1"/>
<path d="M325.9 446.8L327.5 445.4"/>
<path d="M325.2 442.1L327.8 439.8"/>
<path d="M324.4 437.4L326.0 436.1"/>
<path d="M323.6 432.7L325.2 431.3"/>
<path d="M322.8 427.9L324.4 426.6"/>
<path d="M322.0 423.1L323.6 421.8"/>
<path d="M321.2 418.3L323.9 416.0"/>
<path d="M320.4 413.4L322.0 412.0"/>
<path d="M319.6 408.5L321.2 407.1"/>
<path d="M318.8 403.5L320.4 402.2"/>
<path d="M318.0 398.5L319.6 397.2"/>
<path d="M317.1 393.5L319.9 391.3"/>
<path d="M316.3 388.4L317.9 387.1"/>
<path d="M315.4 383.3L317.1 382.0"/>
<path d="M314.6 378.2L316.3 376.9"/>
<path d="M313.7 373.0L315.4 371.7"/>
<path d="M312.9 367.8L315.7 365.6"/>
</g>
<text x="321.0" y="478.3" text-anchor="middle" class="pl">0</text>
<text x="385.3" y="503.3" text-anchor="middle" class="pl">1</text>
<text x="454.0" y="529.2" text-anchor="middle" class="pl">2</text>
<text x="527.0" y="556.9" text-anchor="middle" class="pl">3</text>
<text x="605.5" y="585.3" text-anchor="middle" class="pl">4</text>
<text x="433.6" y="550.3" text-anchor="middle" class="pl">x</text>
<text x="618.0" y="580.1" text-anchor="middle" class="pl">1</text>
<text x="654.4" y="526.9" text-anchor="middle" class="pl">2</text>
<text x="685.5" y="480.0" text-anchor="middle" class="pl">3</text>
<text x="714.5" y="438.2" text-anchor="middle" class="pl">4</text>
<text x="740.2" y="398.7" text-anchor="middle" class="pl">5</text>
<text x="714.5" y="488.8" text-anchor="middle" class="pl">y</text>
<text x="305.5" y="370.2" text-anchor="end" class="pl">1</text>
<text x="311.5" y="393.3" text-anchor="end" class="pl">0.5</text>
<text x="315.5" y="417.6" text-anchor="end" class="pl">0</text>
<text x="318.0" y="440.3" text-anchor="end" class="pl">−0.5</text>
<text x="322.0" y="463.0" text-anchor="end" class="pl">−1</text>
</svg>

<!-- cell brackets -->
<svg class="abs" style="left:960px;top:20px;" width="25" height="580" viewBox="960 20 25 580" fill="none" stroke="#1a1a90" stroke-width="1.1">
<path d="M971.5 30.5H966.5L970.3 32.4L966.8 34.3L970.3 36.2L966.8 38.0L970.3 39.9L966.8 41.8L970.3 43.7L966.8 45.6L970.3 47.5L966.8 49.3L970.3 51.2L966.8 53.1L970.3 55.0L966.8 56.9L970.3 58.8L966.8 60.7L970.3 62.5L966.8 64.4L970.3 66.3L966.8 68.2L970.3 70.1L966.8 72.0L970.3 73.9L966.8 75.7L970.3 77.6L966.8 79.5L970.3 81.4L966.8 83.3L970.3 85.2L966.8 87.1L970.3 88.9L966.8 90.8L970.3 92.7L966.8 94.6L970.3 96.5L966.8 98.4L970.3 100.2L966.8 102.1L970.3 104.0L966.8 105.9L970.3 107.8L966.8 109.7L970.3 111.6L966.8 113.4L970.3 115.3L966.8 117.2L970.3 119.1L966.8 121.0L970.3 122.9L966.8 124.8L970.3 126.6L966.8 128.5L970.3 130.4L966.8 132.3L970.3 134.2L966.8 136.1L970.3 137.9L966.8 139.8L970.3 141.7L966.8 143.6L970.3 145.5L966.8 147.4L970.3 149.3L966.8 151.1L970.3 153.0L966.8 154.9L970.3 156.8L966.8 158.7L970.3 160.6L966.8 162.4L970.3 164.3L966.8 166.2L970.3 168.1L966.8 170.0L970.3 171.9L966.8 173.8L970.3 175.6L966.8 177.5L970.3 179.4L966.8 181.3L970.3 183.2L966.8 185.1L970.3 187.0L966.8 188.8L970.3 190.7L966.8 192.6L970.3 194.5L966.8 196.4L970.3 198.3L966.8 200.1L970.3 202.0L966.8 203.9L970.3 205.8L966.8 207.7L970.3 209.6L966.8 211.5L970.3 213.3L966.8 215.2L970.3 217.1L966.8 219.0L970.3 220.9L966.8 222.8L967 222.5H971.5" stroke-width="0.9"/>
<path d="M971.5 30V223"/>
<path d="M973.5 30.500H978.500V586.500H973.5"/>
<path d="M967 233.500H971.500V586.500H967M968 235.500H971.5"/>
</svg>

<!-- main scrollbars -->
<div class="abs" style="left:998px;top:0;width:2px;height:664px;background:linear-gradient(90deg,#86a3c4,#4f78ab);"></div>
<div class="abs" style="left:984px;top:19px;width:14px;height:641px;background:#fff;"></div>
<div class="abs" style="left:984px;top:21px;width:14px;height:594px;border-radius:7px;background:linear-gradient(90deg,#bdbdbd 0,#e9e9e9 25%,#ffffff 60%,#e2e2e2 100%);"></div>
<div class="abs" style="left:984px;top:24px;width:13px;height:327px;border-radius:6.5px;background:linear-gradient(90deg,#c4c4c4 0,#f6f6f6 35%,#ffffff 60%,#d6d6d6 100%);border:1px solid #9c9c9c;border-bottom-color:#b0b0b0;box-sizing:border-box;"></div>
<div class="abs" style="left:984px;top:615px;width:14px;height:31px;background:#f3f3f3;"></div>
<div class="abs" style="left:987px;top:619px;width:0;height:0;border-left:3.5px solid transparent;border-right:3.5px solid transparent;border-bottom:6px solid #a4a4a4;"></div>
<div class="abs" style="left:987px;top:636px;width:0;height:0;border-left:3.5px solid transparent;border-right:3.5px solid transparent;border-top:6px solid #a4a4a4;"></div>
<div class="abs" style="left:239px;top:646px;width:745px;height:14px;background:#fff;border-top:1px solid #cfcfcf;box-sizing:border-box;"></div>
<div class="abs" style="left:421px;top:646px;width:531px;height:14px;border-radius:0 7px 7px 0;background:linear-gradient(180deg,#bdbdbd 0,#e6e6e6 25%,#ffffff 60%,#e4e4e4 100%);"></div>
<div class="abs" style="left:952px;top:646px;width:32px;height:14px;background:#f3f3f3;"></div>
<div class="abs" style="left:956px;top:649.5px;width:0;height:0;border-top:3.5px solid transparent;border-bottom:3.5px solid transparent;border-right:6px solid #a4a4a4;"></div>
<div class="abs" style="left:973px;top:649.5px;width:0;height:0;border-top:3.5px solid transparent;border-bottom:3.5px solid transparent;border-left:6px solid #a4a4a4;"></div>
<div class="abs" style="left:984px;top:646px;width:14px;height:14px;background:#fff;"></div>
<svg class="abs" style="left:984px;top:646px;" width="14" height="14" viewBox="0 0 14 14" stroke="#8e8e8e" stroke-width="1" fill="none"><path d="M3 13L13 3M7 13L13 7M11 13L13 11"/></svg>
<div class="abs" style="left:239px;top:646px;width:120px;height:14px;background:linear-gradient(180deg,#c8c8c8 0,#c8c8c8 1px,#fdfdfd 1px,#fdfdfd 6px,#e4e4e4 6px,#e4e4e4 9px,#fdfdfd 9px,#fdfdfd 14px);"></div>
<div class="abs" style="left:359px;top:646px;width:62px;height:14px;background:#fdfdfd;border-left:1px solid #b5b5b5;border-right:1px solid #b5b5b5;border-top:1px solid #b5b5b5;box-sizing:border-box;font-size:11.5px;line-height:13px;color:#7d7d7d;"><span style="position:absolute;left:17px;top:0px;letter-spacing:0;">100%</span></div>
<div class="abs" style="left:413px;top:650px;width:0;height:0;border-top:4px solid transparent;border-bottom:4px solid transparent;border-left:5px solid #666;"></div>
<div class="abs" style="left:426.5px;top:647px;width:21px;height:13px;border-radius:6.5px;border:1.5px solid #7f7f7f;background:linear-gradient(180deg,#d5d5d5,#ffffff 60%);box-sizing:border-box;"></div>
<!-- bottom desktop fragments -->
<div class="abs" style="left:0;top:660px;width:1000px;height:4px;background:#12224c;"></div>
<div class="abs" style="left:229px;top:660px;width:10px;height:4px;background:#1d3f86;"></div>
<div class="abs" style="left:0;top:660px;width:1000px;height:4px;overflow:hidden;"><div class="abs" style="left:377px;top:-1.5px;font-size:13.5px;line-height:15px;color:#dfe4ee;white-space:nowrap;letter-spacing:0.4px;">IMG_2359.jpg</div>
<div class="abs" style="left:893px;top:-1.5px;font-size:14px;line-height:15px;color:#dfe4ee;white-space:nowrap;letter-spacing:0.3px;">iTunes Music alia</div></div>
</body></html>
